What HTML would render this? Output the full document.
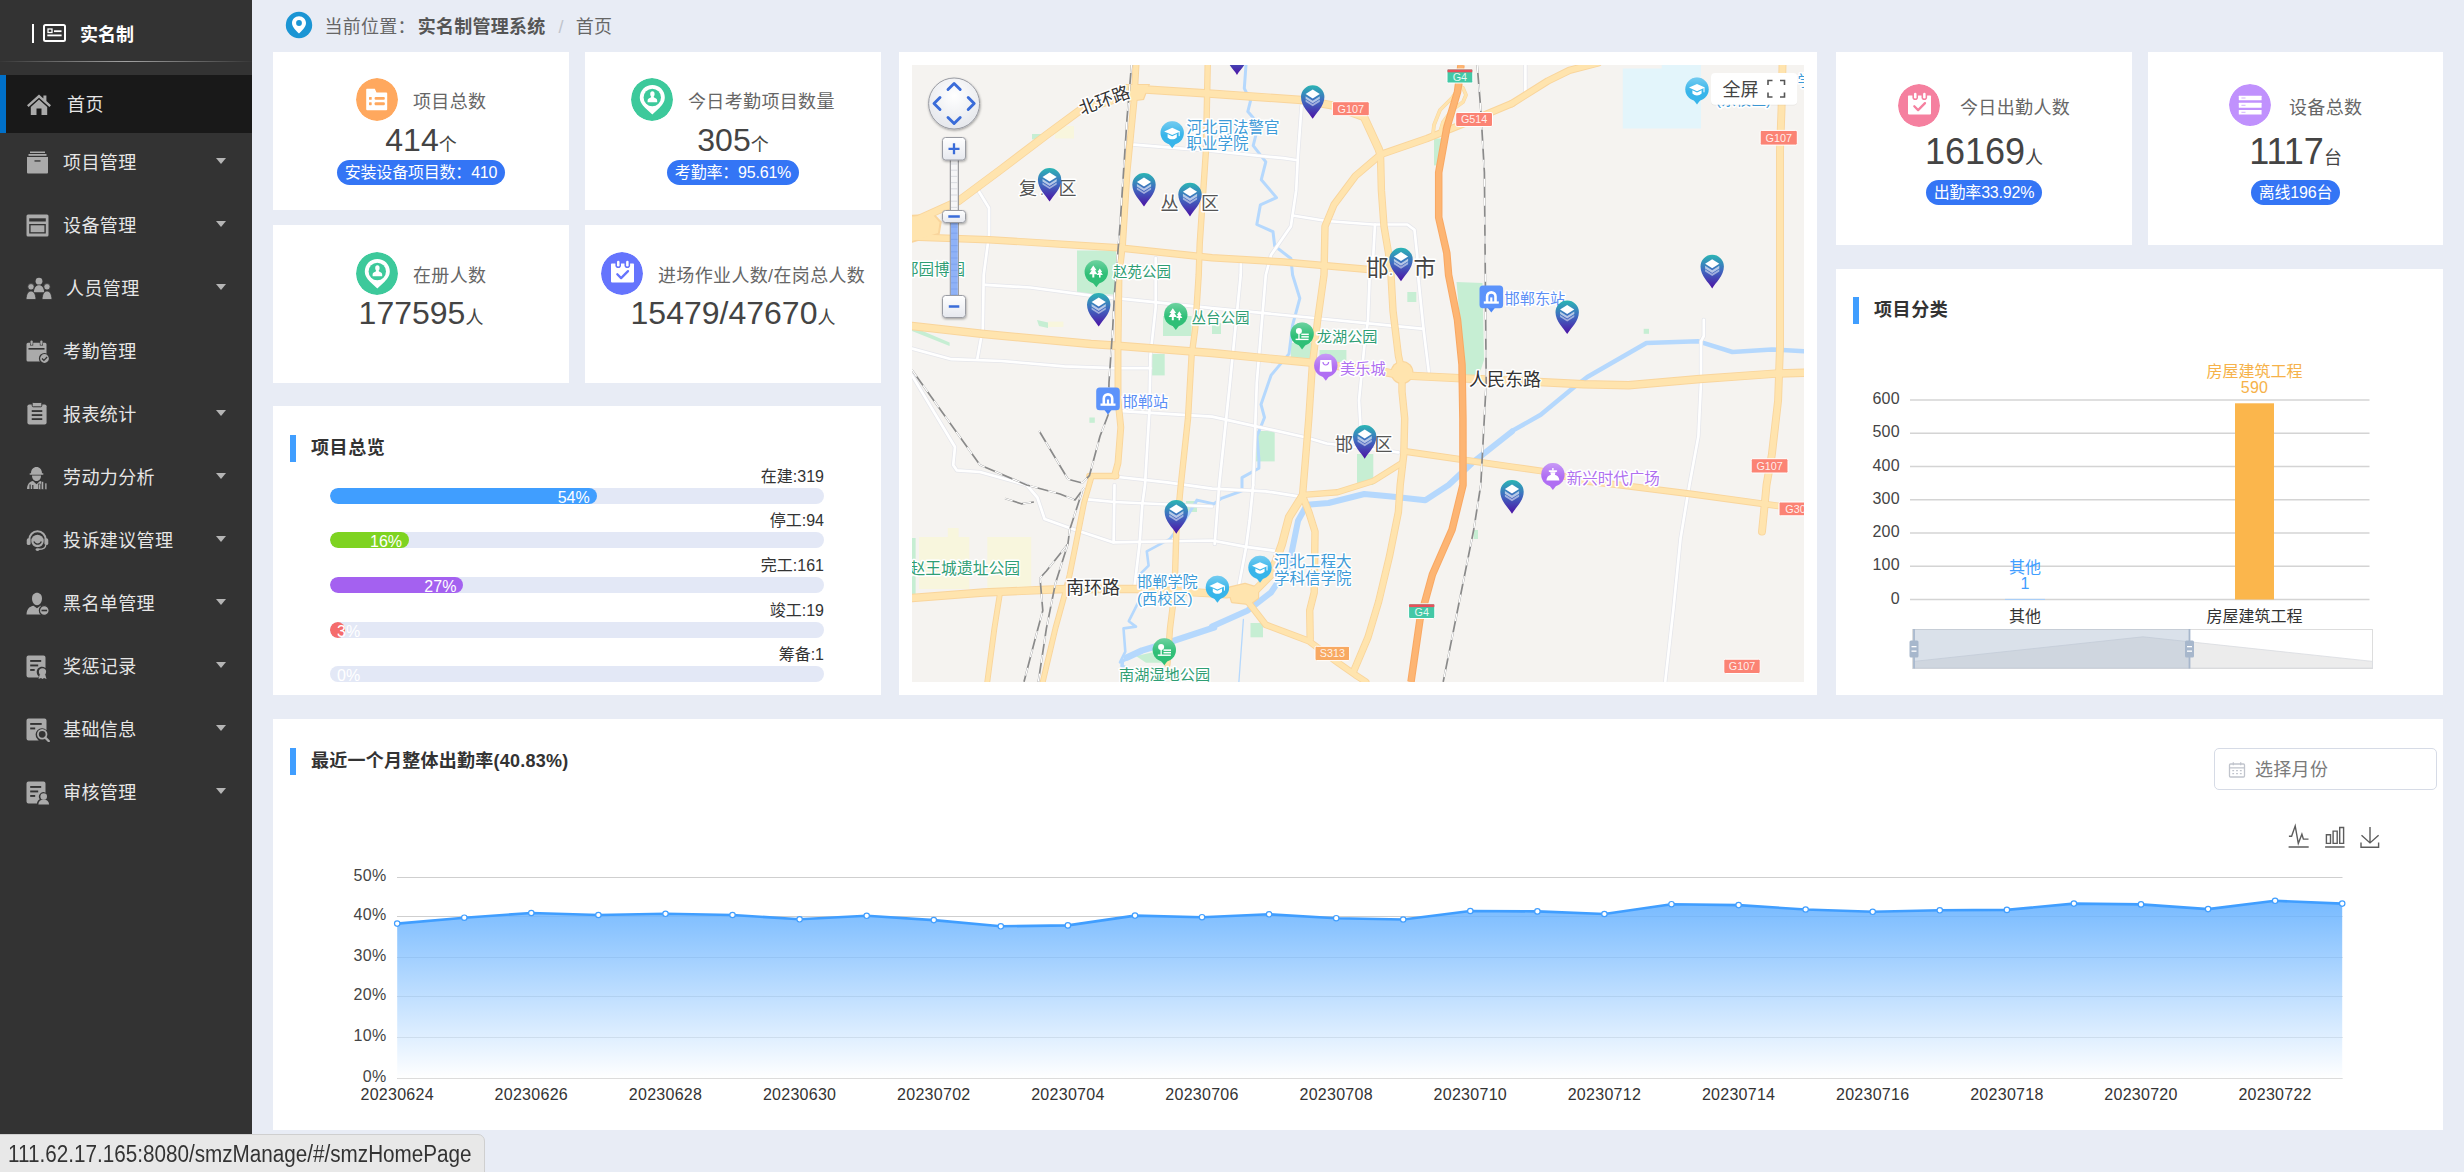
<!DOCTYPE html>
<html lang="zh-CN">
<head>
<meta charset="utf-8">
<title>实名制管理系统</title>
<style>
*{box-sizing:border-box;margin:0;padding:0}
html,body{width:2464px;height:1172px;overflow:hidden}
body{position:relative;background:#e8ecf5;font-family:"Liberation Sans","Noto Sans CJK SC",sans-serif;color:#333}
.abs{position:absolute}
/* sidebar */
#side{position:absolute;left:0;top:0;width:252px;height:1172px;background:#333333}
#side .logo{position:absolute;left:80px;top:21px;font-size:18px;font-weight:bold;color:#fff;line-height:28px;white-space:nowrap}
#side .bar{position:absolute;left:32px;top:24px;width:2px;height:19px;background:#fff}
#side .hr{position:absolute;left:0;top:61px;width:252px;height:1px;background:linear-gradient(90deg,rgba(255,255,255,0.02),rgba(255,255,255,0.55) 50%,rgba(255,255,255,0.02))}
.mi{position:absolute;left:0;width:252px;height:58px;color:#e6e6e6;font-size:18px;line-height:58px;white-space:nowrap}
.mi.on{background:#191919;border-left:6px solid #0070c9}
.mi svg{position:absolute;left:26px;top:18px}
.mi span{position:absolute;left:63px;top:1.2px;letter-spacing:.4px}
.mi i{position:absolute;left:216px;top:25px;width:0;height:0;border-left:5.5px solid transparent;border-right:5.5px solid transparent;border-top:6px solid #b5b5b5}
/* breadcrumb */
#bc{position:absolute;left:324.5px;top:13.6px;letter-spacing:.25px;font-size:18px;line-height:27px;color:#666;white-space:nowrap}
#bc b{color:#555;margin-left:2px}
#bc em{font-style:normal;color:#c0c4cc;margin:0 12px 0 13px}
/* cards */
.card{position:absolute;background:#fff}
.ic{position:absolute;width:42px;height:42px;border-radius:50%}
.lb{position:absolute;padding-top:1.2px;letter-spacing:.35px;font-size:18px;line-height:24px;color:#666;white-space:nowrap}
.num{position:absolute;left:0;width:100%;text-align:center;font-size:32px;line-height:36px;color:#444;white-space:nowrap}
.num small{font-size:18px;line-height:1}
.num.big{font-size:36px;line-height:40px}
.bdg{position:absolute;height:25px;border-radius:13px;background:#3475f5;color:#fff;font-size:16px;line-height:26px;text-align:center;white-space:nowrap;letter-spacing:-0.2px}
.ttl{position:absolute;letter-spacing:.6px;font-size:18px;font-weight:bold;color:#333;line-height:27px;white-space:nowrap}
.ttl:before{content:"";position:absolute;left:-21px;top:0;width:6px;height:27px;background:#409eff}
/* progress */
.pl{position:absolute;right:57px;font-size:16px;line-height:20px;color:#333;white-space:nowrap;text-align:right}
.pt{position:absolute;left:57px;width:494px;height:16px;border-radius:8px;background:#e3e8f6;overflow:hidden}
.pf{position:absolute;left:0;top:0;height:16px;border-radius:8px;color:#fff;font-size:16px;line-height:20px;text-align:right;padding-right:7px;white-space:nowrap}
/* status */
#st span{display:inline-block;transform:scaleX(.899);transform-origin:0 50%}
#st{position:absolute;left:-1px;top:1134px;width:486px;height:40px;background:#e8e8e8;border:1px solid #cfcfcf;border-top-right-radius:7px;font-size:23px;line-height:39px;color:#333;padding-left:8px;white-space:nowrap}
</style>
</head>
<body>

<!-- SIDEBAR -->
<div id="side">
  <div class="bar"></div>
  <svg class="abs" style="left:43px;top:24px" width="23" height="18" viewBox="0 0 23 18"><rect x="1" y="1" width="21" height="16" rx="1.5" fill="none" stroke="#fff" stroke-width="2"/><rect x="5" y="5" width="4" height="3.5" fill="none" stroke="#fff" stroke-width="1.3"/><rect x="11" y="6.3" width="7.5" height="1.8" fill="#fff"/><rect x="4.3" y="10.5" width="14.3" height="1.8" fill="#fff"/></svg>
  <div class="logo">实名制</div>
  <div class="hr"></div>
  <div class="mi on" style="top:75px;line-height:59px"><svg width="26" height="24" viewBox="0 0 26 24" style="left:20px;top:17px"><path d="M13 2.500L1 13.200l1.600 1.700L13 5.700l10.400 9.200 1.600-1.700-4.600-4.100V3.500h-3v2.900z" fill="#aaaaaa"/><path d="M13 7.600l-8.200 7.300V23h5.700v-6.500h5V23h5.700v-8.100z" fill="#aaaaaa"/></svg><span style="left:61px">首页</span></div>
  <div class="mi" style="top:133px"><svg width="23" height="23" viewBox="0 0 23 23"><rect x="4" y="0.500" width="15" height="1.500" fill="#aaaaaa"/><rect x="2.500" y="3" width="18" height="1.800" fill="#aaaaaa"/><path d="M1 6h21v15.500a1 1 0 0 1-1 1H2a1 1 0 0 1-1-1z" fill="#aaaaaa"/><rect x="8.500" y="9.300" width="6" height="1.300" fill="#333"/></svg><span style="left:63px">项目管理</span><i></i></div>
  <div class="mi" style="top:196px"><svg width="23" height="23" viewBox="0 0 23 23"><rect x="0.500" y="0.500" width="22" height="22" rx="1.500" fill="#aaaaaa"/><rect x="3.200" y="4.300" width="16.600" height="3.200" fill="#333"/><rect x="3.200" y="10" width="16.600" height="9.500" fill="#333"/><rect x="4.600" y="11.300" width="13.800" height="6.900" fill="#aaaaaa"/></svg><span style="left:63px">设备管理</span><i></i></div>
  <div class="mi" style="top:259px"><svg width="26" height="23" viewBox="0 0 26 23"><circle cx="13" cy="4.200" r="3.400" fill="#aaaaaa"/><path d="M13 8.200c-3 0-4.800 2.600-5.200 7h10.400c-.4-4.400-2.200-7-5.200-7z" fill="#aaaaaa"/><circle cx="5" cy="9.800" r="3.200" fill="#aaaaaa" stroke="#333" stroke-width="0.800"/><circle cx="21" cy="9.800" r="3.200" fill="#aaaaaa" stroke="#333" stroke-width="0.800"/><path d="M5 14c-3 0-4.600 3-5 8.500h10c-.4-5.500-2-8.500-5-8.500z" fill="#aaaaaa" stroke="#333" stroke-width="0.800"/><path d="M21 14c-3 0-4.600 3-5 8.500h10c-.4-5.500-2-8.500-5-8.500z" fill="#aaaaaa" stroke="#333" stroke-width="0.800"/></svg><span style="left:66px">人员管理</span><i></i></div>
  <div class="mi" style="top:322px"><svg width="24" height="24" viewBox="0 0 24 24"><rect x="4.500" y="0.500" width="2.200" height="4.500" rx="1" fill="#aaaaaa"/><rect x="14.300" y="0.500" width="2.200" height="4.500" rx="1" fill="#aaaaaa"/><path d="M2 2.800h2v2.700h3.200V2.800h6.600v2.700H17V2.800h2a1.500 1.500 0 0 1 1.500 1.500V20a1.500 1.500 0 0 1-1.500 1.500H2A1.500 1.500 0 0 1 .5 20V4.300A1.500 1.500 0 0 1 2 2.800z" fill="#aaaaaa"/><rect x="2.500" y="8" width="16" height="1.600" fill="#333"/><circle cx="18.500" cy="18.500" r="5" fill="#aaaaaa" stroke="#333" stroke-width="1.200"/><path d="M16 18.500l1.900 1.900 3.200-3.400" fill="none" stroke="#333" stroke-width="1.300"/></svg><span style="left:63px">考勤管理</span></div>
  <div class="mi" style="top:385px"><svg width="22" height="23" viewBox="0 0 22 24" style="top:17px"><rect x="1" y="2.500" width="20" height="21" rx="2" fill="#aaaaaa"/><rect x="6" y="0.500" width="10" height="4.500" rx="1" fill="#aaaaaa" stroke="#333" stroke-width="1"/><rect x="5.500" y="8.500" width="11" height="1.900" fill="#333"/><rect x="5.500" y="12.700" width="11" height="1.900" fill="#333"/><rect x="5.500" y="16.900" width="11" height="1.900" fill="#333"/></svg><span style="left:63px">报表统计</span><i></i></div>
  <div class="mi" style="top:448px"><svg width="23" height="24" viewBox="0 0 23 24"><path d="M5 7.200c0-3.800 2.400-6.200 5.500-6.200S16 3.400 16 7.200h1.300v1.500H3.700V7.200z" fill="#aaaaaa"/><path d="M6 9.500h9c0 3.300-1.800 5.500-4.500 5.500S6 12.800 6 9.500z" fill="#aaaaaa"/><path d="M1 23c.3-5 2.600-7.500 6-8l3.500 3.200L14 15c1.200.2 2.200.6 3 1.300V23z" fill="#aaaaaa"/><rect x="12.500" y="18" width="2" height="5.500" fill="#aaaaaa" stroke="#333" stroke-width="0.600"/><rect x="15.700" y="15.500" width="2" height="8" fill="#aaaaaa" stroke="#333" stroke-width="0.600"/><rect x="18.900" y="17" width="2" height="6.500" fill="#aaaaaa" stroke="#333" stroke-width="0.600"/><rect x="3.500" y="18.500" width="1.200" height="5" fill="#333"/><rect x="6.200" y="19" width="1.200" height="4.500" fill="#333"/></svg><span style="left:63px">劳动力分析</span><i></i></div>
  <div class="mi" style="top:511px"><svg width="23" height="23" viewBox="0 0 25 25"><path d="M3.500 12C3.500 6.500 7.500 2.500 12.500 2.500S21.500 6.500 21.500 12" fill="none" stroke="#aaaaaa" stroke-width="2.200"/><circle cx="12.500" cy="13" r="6.800" fill="#aaaaaa"/><rect x="0.800" y="10" width="4.200" height="7.500" rx="2" fill="#aaaaaa"/><rect x="20" y="10" width="4.200" height="7.500" rx="2" fill="#aaaaaa"/><path d="M8.500 13.500c1 2 2.500 3 4.200 3s3.100-1 4-3" fill="none" stroke="#333" stroke-width="1.400"/><path d="M21.500 17c0 3-3 5-8 5" fill="none" stroke="#aaaaaa" stroke-width="1.500"/><ellipse cx="12.500" cy="22.300" rx="2.200" ry="1.500" fill="#aaaaaa"/></svg><span style="left:63px">投诉建议管理</span><i></i></div>
  <div class="mi" style="top:574px"><svg width="24" height="24" viewBox="0 0 24 24"><path d="M6 6.500C6 3 8.200.800 11 .800S16 3 16 6.500c0 3.700-2.200 6.700-5 6.700S6 10.200 6 6.500z" fill="#aaaaaa"/><path d="M.500 22.500c.3-5.500 3-8 7-8.700l3.500 2.500 3.500-2.500c1.500.3 2.800.9 3.800 1.800v6.900z" fill="#aaaaaa"/><circle cx="18.300" cy="18.500" r="4.900" fill="#aaaaaa" stroke="#333" stroke-width="1.300"/><rect x="15.500" y="17.700" width="5.600" height="1.600" fill="#333"/></svg><span style="left:63px">黑名单管理</span><i></i></div>
  <div class="mi" style="top:637px"><svg width="23" height="24" viewBox="0 0 23 24"><path d="M2.500.500h15a2 2 0 0 1 2 2V13c-1-.8-2.200-1.200-3.500-1.200-3 0-5.300 2.300-5.300 5.200 0 1.800.8 3.300 2 4.300V22.500H2.500a2 2 0 0 1-2-2v-18a2 2 0 0 1 2-2z" fill="#aaaaaa"/><rect x="4.200" y="5" width="11" height="1.900" fill="#333"/><rect x="4.200" y="9.500" width="8" height="1.900" fill="#333"/><rect x="4.200" y="14" width="4.500" height="1.900" fill="#333"/><circle cx="16.500" cy="16.800" r="3.600" fill="#aaaaaa"/><path d="M13.800 19.500L12.500 24l2.500-1 1.500 1 1.500-1 2.500 1-1.300-4.500z" fill="#aaaaaa"/></svg><span style="left:63px">奖惩记录</span><i></i></div>
  <div class="mi" style="top:700px"><svg width="24" height="24" viewBox="0 0 24 24"><path d="M2.500.500h16a2 2 0 0 1 2 2v9.800a6.300 6.300 0 0 0-9.300 8.500c.5.700 1 1.200 1.600 1.700H2.500a2 2 0 0 1-2-2v-18a2 2 0 0 1 2-2z" fill="#aaaaaa"/><rect x="4.200" y="5" width="11.500" height="1.900" fill="#333"/><rect x="4.200" y="9.500" width="5" height="1.900" fill="#333"/><circle cx="16.200" cy="16.300" r="4.300" fill="none" stroke="#aaaaaa" stroke-width="1.800"/><path d="M19.300 19.600l3.500 3.500" stroke="#aaaaaa" stroke-width="2.200" stroke-linecap="round"/></svg><span style="left:63px">基础信息</span><i></i></div>
  <div class="mi" style="top:763px"><svg width="24" height="24" viewBox="0 0 24 24"><path d="M2.500.500h15a2 2 0 0 1 2 2v9.200a4.500 4.500 0 0 0-5.800 6.500c-1.600.8-2.500 2.300-2.800 4.300H2.500a2 2 0 0 1-2-2v-18a2 2 0 0 1 2-2z" fill="#aaaaaa"/><rect x="4.200" y="5" width="11" height="1.900" fill="#333"/><rect x="4.200" y="9.500" width="8" height="1.900" fill="#333"/><rect x="4.200" y="14" width="5" height="1.900" fill="#333"/><circle cx="17.700" cy="15.500" r="3.300" fill="#aaaaaa"/><path d="M12.300 23.500c.3-3.300 2.300-5 5.400-5s5.100 1.700 5.400 5z" fill="#aaaaaa"/></svg><span style="left:63px">审核管理</span><i></i></div>
</div>

<!-- BREADCRUMB -->
<svg class="abs" style="left:285px;top:11px" width="28" height="28" viewBox="0 0 28 28"><circle cx="14" cy="14" r="13.2" fill="#1b95d4"/><path d="M14 5.2c-4 0-7 3-7 6.8 0 4.6 5.2 8.600 7 10.600 1.800-2 7-6 7-10.600 0-3.800-3-6.800-7-6.800z" fill="#fff"/><circle cx="14" cy="12" r="2.900" fill="#1b95d4"/></svg>
<div id="bc">当前位置：<b>实名制管理系统</b><em>/</em>首页</div>

<!-- LEFT CARDS -->
<div class="card" style="left:273px;top:52px;width:296px;height:158px" id="c1"><svg class="ic" style="left:83px;top:26px;height:43px" viewBox="0 0 42 43"><ellipse cx="21" cy="21.5" rx="21" ry="21.5" fill="#ffa85e"/><path d="M11 10.700h7.800l1.700 3.900H30.200a1 1 0 0 1 1 1V31.300a1 1 0 0 1-1 1H11.200a1 1 0 0 1-1-1V11.700a1 1 0 0 1 .8-1z" fill="#fff"/><rect x="13" y="18.900" width="2.700" height="2.900" rx=".6" fill="#ffa85e"/><rect x="18.600" y="18.900" width="10.200" height="2.900" rx="1" fill="#ffa85e"/><rect x="13" y="24.300" width="2.700" height="2.900" rx=".6" fill="#ffa85e"/><rect x="18.600" y="24.300" width="10.200" height="2.900" rx="1" fill="#ffa85e"/></svg><div class="lb" style="left:140px;top:37px">项目总数</div><div class="num" style="top:70px">414<small>个</small></div><div class="bdg" style="left:64px;top:108px;width:168px">安装设备项目数：410</div></div>
<div class="card" style="left:585px;top:52px;width:296px;height:158px" id="c2"><svg class="ic" style="left:46px;top:26px;height:43px" viewBox="0 0 42 43"><ellipse cx="21" cy="21.500" rx="21" ry="21.500" fill="#3dc99b"/><path d="M21.300 6.900c-7 0-12.500 5.500-12.500 12.400 0 4.500 2.400 7.600 5.200 10.400l7.300 6.700 7.300-6.700c2.800-2.800 5.200-5.900 5.200-10.400 0-6.900-5.500-12.400-12.500-12.400z" fill="#fff"/><circle cx="21.300" cy="19.500" r="8.700" fill="#3dc99b"/><path d="M21.400 13.300c-1.400 0-2.200 1.100-2.200 2.700 0 1.200.4 2.200 1 2.800-.1.600-.6.900-1.500 1.200-1.300.5-2.100 1.300-2.100 2.800v1.500h9.600v-1.500c0-1.500-.8-2.300-2.100-2.800-.9-.3-1.400-.6-1.500-1.200.6-.6 1-1.600 1-2.800 0-1.600-.8-2.700-2.200-2.700z" fill="#fff"/></svg><div class="lb" style="left:103px;top:37px">今日考勤项目数量</div><div class="num" style="top:70px">305<small>个</small></div><div class="bdg" style="left:82px;top:108px;width:132px">考勤率：95.61%</div></div>
<div class="card" style="left:273px;top:225px;width:296px;height:158px" id="c3"><svg class="ic" style="left:83px;top:27px;height:43px" viewBox="0 0 42 43"><ellipse cx="21" cy="21.500" rx="21" ry="21.500" fill="#3dc99b"/><path d="M21.300 6.900c-7 0-12.500 5.500-12.500 12.400 0 4.500 2.400 7.600 5.200 10.400l7.300 6.700 7.300-6.700c2.800-2.800 5.200-5.900 5.200-10.400 0-6.900-5.500-12.400-12.500-12.400z" fill="#fff"/><circle cx="21.300" cy="19.500" r="8.700" fill="#3dc99b"/><path d="M21.400 13.300c-1.400 0-2.200 1.100-2.200 2.700 0 1.200.4 2.200 1 2.800-.1.600-.6.900-1.500 1.200-1.300.5-2.100 1.300-2.100 2.800v1.500h9.600v-1.500c0-1.500-.8-2.300-2.100-2.800-.9-.3-1.400-.6-1.500-1.200.6-.6 1-1.600 1-2.800 0-1.600-.8-2.700-2.200-2.700z" fill="#fff"/></svg><div class="lb" style="left:140px;top:38px">在册人数</div><div class="num" style="top:70px">177595<small>人</small></div></div>
<div class="card" style="left:585px;top:225px;width:296px;height:158px" id="c4"><svg class="ic" style="left:16px;top:27px;height:43px" viewBox="0 0 42 43"><ellipse cx="21" cy="21.500" rx="21" ry="21.500" fill="#6574fd"/><rect x="10" y="11.600" width="23" height="18.800" rx=".8" fill="#fff"/><rect x="14.400" y="8.500" width="5.600" height="7.500" rx="2.800" fill="#6574fd"/><rect x="23.500" y="8.500" width="5.600" height="7.500" rx="2.800" fill="#6574fd"/><rect x="16" y="8.800" width="2.500" height="5.600" rx="1.250" fill="#fff"/><rect x="25.100" y="8.800" width="2.500" height="5.600" rx="1.250" fill="#fff"/><path d="M16.300 22.300l3.800 3.800 6.900-7" fill="none" stroke="#6574fd" stroke-width="2.300" stroke-linecap="round" stroke-linejoin="round"/></svg><div class="lb" style="left:73px;top:38px">进场作业人数/在岗总人数</div><div class="num" style="top:70px">15479/47670<small>人</small></div></div>

<!-- OVERVIEW -->
<div class="card" style="left:273px;top:406px;width:608px;height:289px" id="ov"><div class="ttl" style="left:38px;top:29px">项目总览</div><div class="pl" style="top:61.0px">在建:319</div><div class="pt" style="top:82.0px"><div class="pf" style="width:54%;background:#409eff">54%</div></div><div class="pl" style="top:105.0px">停工:94</div><div class="pt" style="top:126.0px"><div class="pf" style="width:16%;background:#7ed321">16%</div></div><div class="pl" style="top:150.0px">完工:161</div><div class="pt" style="top:171.0px"><div class="pf" style="width:27%;background:#a461f0">27%</div></div><div class="pl" style="top:195.0px">竣工:19</div><div class="pt" style="top:216.0px"><div class="pf" style="width:3%;background:#f56c6c;text-align:left;padding:0 0 0 7px;overflow:visible">3%</div></div><div class="pl" style="top:239.0px">筹备:1</div><div class="pt" style="top:260.0px"><div class="pf" style="width:60px;text-align:left;padding:0 0 0 7px">0%</div></div></div>

<!-- MAP -->
<div class="card" style="left:899px;top:52px;width:918px;height:643px" id="mapcard"><svg class="abs" style="left:13px;top:13px" width="892" height="617" viewBox="912 65 892 617" font-family="Liberation Sans, Noto Sans CJK SC, sans-serif"><defs><linearGradient id="mk" x1="0" y1="0" x2="0" y2="1"><stop offset="0" stop-color="#2bb5b4"/><stop offset=".45" stop-color="#3f6dc0"/><stop offset="1" stop-color="#4c12a5"/></linearGradient><linearGradient id="btn" x1="0" y1="0" x2="0" y2="1"><stop offset="0" stop-color="#ffffff"/><stop offset="1" stop-color="#e6e8ee"/></linearGradient><radialGradient id="pan" cx=".5" cy=".35" r=".7"><stop offset="0" stop-color="#ffffff"/><stop offset="1" stop-color="#e3e5ea"/></radialGradient><filter id="sh" x="-30%" y="-30%" width="160%" height="160%"><feDropShadow dx="0.5" dy="1.2" stdDeviation="1.3" flood-color="#000" flood-opacity=".35"/></filter><g id="m"><path d="M0 0C-3.400-5.800-11.700-12.600-11.700-21.900a11.700 11.700 0 0 1 23.400 0C11.700-12.600 3.400-5.800 0 0z" fill="url(#mk)"/><path d="M0-29.200l7.100 4.500-7.100 4.500-7.100-4.500z" fill="#fff"/><path d="M-7.100-22.600l7.100 4.500 7.100-4.500v2.600l-7.100 4.500-7.100-4.500z" fill="#fff" fill-opacity=".62"/><path d="M-7.100-19.200l7.100 4.500 7.100-4.500v2.200l-7.100 4.500-7.100-4.500z" fill="#fff" fill-opacity=".5"/></g><linearGradient id="pg" x1="0" y1="0" x2="0" y2="1"><stop offset="0" stop-color="#fff" stop-opacity=".3"/><stop offset=".6" stop-color="#fff" stop-opacity="0"/></linearGradient></defs><rect x="912" y="65" width="892" height="617" fill="#f5f3f0"/><rect x="1077.0" y="250.5" width="39.0" height="44.0" fill="#c6eed3"/><rect x="1032.0" y="134.0" width="11.0" height="5.4" fill="#c6eed3"/><rect x="1055.0" y="126.0" width="19.0" height="12.5" fill="#f8f6dd"/><rect x="1163.0" y="316.0" width="28.6" height="20.0" fill="#c6eed3"/><path d="M1037 320L1048 322.500L1048 328L1039 326z" fill="#c6eed3"/><rect x="1048.0" y="321.6" width="15.4" height="5.4" fill="#f8f6dd"/><path d="M912 326.500L949.600 342.500V346L912 331z" fill="#c6eed3"/><rect x="1152.0" y="353.9" width="12.7" height="21.5" fill="#c6eed3"/><rect x="1434.0" y="138.5" width="9.0" height="26.9" fill="#c6eed3"/><rect x="1290.9" y="343.0" width="21.5" height="16.0" fill="#c6eed3"/><rect x="1319.5" y="350.0" width="26.9" height="14.6" fill="#c6eed3"/><rect x="1212.0" y="323.0" width="9.0" height="11.0" fill="#c6eed3"/><rect x="1255.0" y="431.0" width="19.7" height="30.4" fill="#c6eed3"/><rect x="1357.0" y="454.0" width="16.3" height="31.0" fill="#c6eed3"/><path d="M1456.500 282L1482.500 283L1484 360L1479 375.400L1463 375.400L1462 345z" fill="#c6eed3"/><rect x="1407.3" y="292.0" width="9.0" height="10.0" fill="#c6eed3"/><rect x="1643.7" y="328.8" width="5.3" height="5.0" fill="#c6eed3"/><path d="M1622.800 68.600H1661.700V65H1701V128.600H1622.800z" fill="#e3f5fb"/><rect x="919.0" y="537.0" width="50.3" height="52.0" fill="#f8f6dd"/><rect x="947.8" y="528.0" width="10.8" height="10.0" fill="#f8f6dd"/><rect x="987.3" y="537.0" width="43.9" height="52.0" fill="#f8f6dd"/><rect x="912.0" y="538.0" width="3.6" height="56.0" fill="#c6eed3"/><path d="M1136 656L1170 648.500V662.700H1146z" fill="#c6eed3"/><rect x="1250.5" y="623.0" width="12.5" height="14.3" fill="#c6eed3"/><rect x="1186.0" y="501.0" width="11.0" height="11.0" fill="#c6eed3"/><rect x="1473.6" y="530.0" width="4.4" height="9.0" fill="#c6eed3"/><rect x="1089.4" y="417.5" width="5.4" height="5.3" fill="#c6eed3"/><path d="M1246.0 65.0 L1244.3 88.3 L1250.5 100.8 L1247.8 111.6 L1258.6 124.0 L1253.2 145.6 L1265.8 161.8 L1261.3 179.7 L1276.5 197.6 L1260.4 204.8 L1256.8 224.5 L1273.0 231.7 L1274.7 246.0 L1290.9 258.5 L1292.6 275.0 L1299.8 298.3 L1292.6 325.2 L1289.0 353.9 L1271.0 375.4 L1261.0 404.4 L1264.5 417.5 L1257.0 436.3 L1258.9 458.8 L1258.9 468.2 L1242.0 477.6 L1242.0 490.8 L1221.4 498.3 L1213.9 503.9 L1197.0 500.1 L1184.4 520.8 L1176.3 530.2" fill="none" stroke="#b5d8fd" stroke-width="3" stroke-linejoin="round" stroke-linecap="round"/><path d="M1512.0 431.0 L1540.7 414.8 L1573.0 388.0 L1587.3 377.0 L1646.4 343.0 L1698.4 341.3 L1732.4 352.0 L1771.9 349.4 L1804.0 351.2" fill="none" stroke="#b5d8fd" stroke-width="4.5" stroke-linejoin="round" stroke-linecap="round"/><path d="M1512.0 431.5 L1471.9 463.2 L1448.6 485.0 L1425.3 500.2 L1391.2 496.6 L1364.3 494.0 L1328.5 503.0 L1307.0 504.7 L1298.0 520.8 L1289.0 565.6 L1271.0 592.5 L1247.8 610.4 L1212.0 626.6" fill="none" stroke="#b5d8fd" stroke-width="6" stroke-linejoin="round" stroke-linecap="round"/><path d="M1214.0 627.5 L1170.0 642.0 L1142.0 650.5 L1127.0 657.5" fill="none" stroke="#b5d8fd" stroke-width="6.5" stroke-linejoin="round" stroke-linecap="round"/><path d="M1130.0 657.0 L1122.5 661.0 L1122.0 666.0 L1128.0 668.5" fill="none" stroke="#b5d8fd" stroke-width="3.5" stroke-linejoin="round" stroke-linecap="round"/><path d="M1176.3 530.2 L1170.0 538.8 L1146.8 551.3 L1148.6 565.6 L1139.6 574.6 L1141.4 596.1 L1128.8 621.2 L1136.0 626.6 L1123.5 628.4 L1125.3 651.7 L1120.0 662.4" fill="none" stroke="#b5d8fd" stroke-width="2.6" stroke-linejoin="round" stroke-linecap="round"/><path d="M1243.4 619.4 L1238.9 681.8" fill="none" stroke="#b5d8fd" stroke-width="1.3" stroke-linejoin="round" stroke-linecap="round"/><path d="M978.0 190.0 L989.0 208.0 L989.0 235.0 L983.7 275.0 L982.8 328.8 L977.4 358.3" fill="none" stroke="#e5e6eb" stroke-width="4.2" stroke-linejoin="round" stroke-linecap="round"/><path d="M1134.0 144.7 L1212.0 151.0 L1283.7 158.2 L1296.0 160.0" fill="none" stroke="#e5e6eb" stroke-width="4.2" stroke-linejoin="round" stroke-linecap="round"/><path d="M1301.6 105.3 L1298.0 154.6 L1296.2 190.4 L1290.9 226.3 L1271.0 255.0 L1265.8 275.0 L1256.8 382.5 L1253.2 485.0" fill="none" stroke="#e5e6eb" stroke-width="4.2" stroke-linejoin="round" stroke-linecap="round"/><path d="M1292.6 215.5 L1326.7 221.0 L1373.3 224.5 L1407.3 224.5 L1414.5 229.9 L1417.2 255.0 L1418.0 275.0 L1423.5 328.8 L1428.8 371.8" fill="none" stroke="#e5e6eb" stroke-width="4.2" stroke-linejoin="round" stroke-linecap="round"/><path d="M1375.0 224.5 L1373.3 255.0 L1369.7 275.0 L1368.0 319.8 L1364.3 346.7 L1359.0 400.4 L1360.7 429.0" fill="none" stroke="#e5e6eb" stroke-width="4.2" stroke-linejoin="round" stroke-linecap="round"/><path d="M1525.4 65.0 L1525.4 93.7" fill="none" stroke="#e5e6eb" stroke-width="4.2" stroke-linejoin="round" stroke-linecap="round"/><path d="M912.0 348.5 L951.4 359.2 L1001.6 361.0 L1064.3 366.4 L1114.5 368.2 L1150.4 368.2" fill="none" stroke="#e5e6eb" stroke-width="4.2" stroke-linejoin="round" stroke-linecap="round"/><path d="M985.5 284.9 L1030.3 287.5 L1091.2 295.6 L1125.3 299.2 L1212.0 308.2 L1314.2 318.0 L1423.5 328.8" fill="none" stroke="#e5e6eb" stroke-width="4.2" stroke-linejoin="round" stroke-linecap="round"/><path d="M1155.7 275.0 L1155.7 307.3 L1150.4 355.6 L1149.5 409.4 L1145.0 485.0 L1142.3 504.7 L1139.6 544.0 L1134.2 589.0" fill="none" stroke="#e5e6eb" stroke-width="4.2" stroke-linejoin="round" stroke-linecap="round"/><path d="M1155.7 258.0 L1155.7 275.0" fill="none" stroke="#e5e6eb" stroke-width="4.2" stroke-linejoin="round" stroke-linecap="round"/><path d="M912.0 375.4 L955.0 447.0 L953.2 465.0 L956.8 470.3 L980.0 472.0 L1026.7 485.0 L1037.4 497.5 L1044.6 519.0 L1069.7 528.0 L1112.7 542.3 L1212.0 540.5 L1246.0 546.8 L1278.3 551.3" fill="none" stroke="#e5e6eb" stroke-width="4.2" stroke-linejoin="round" stroke-linecap="round"/><path d="M1121.7 411.2 L1212.0 416.6 L1305.2 437.2 L1326.7 443.5 L1398.4 452.4" fill="none" stroke="#e5e6eb" stroke-width="4.2" stroke-linejoin="round" stroke-linecap="round"/><path d="M1240.7 275.0 L1230.0 382.5 L1219.2 485.0 L1214.7 544.0" fill="none" stroke="#e5e6eb" stroke-width="4.2" stroke-linejoin="round" stroke-linecap="round"/><path d="M1087.6 499.3 L1114.5 502.0 L1212.0 506.5" fill="none" stroke="#e5e6eb" stroke-width="4.2" stroke-linejoin="round" stroke-linecap="round"/><path d="M1114.5 485.0 L1113.6 542.3" fill="none" stroke="#e5e6eb" stroke-width="4.2" stroke-linejoin="round" stroke-linecap="round"/><path d="M1253.2 485.0 L1249.6 520.8 L1246.0 547.7 L1238.9 585.4" fill="none" stroke="#e5e6eb" stroke-width="4.2" stroke-linejoin="round" stroke-linecap="round"/><path d="M1118.0 477.0 L1167.0 482.3 L1212.0 488.6 L1265.8 491.3 L1299.8 496.6" fill="none" stroke="#e5e6eb" stroke-width="4.2" stroke-linejoin="round" stroke-linecap="round"/><path d="M1703.8 319.8 L1703.8 336.0 L1701.0 341.3 L1701.0 382.5 L1698.4 436.3 L1689.4 485.0 L1680.5 538.8 L1673.3 610.4 L1665.2 681.8" fill="none" stroke="#e5e6eb" stroke-width="4.2" stroke-linejoin="round" stroke-linecap="round"/><path d="M1241.0 258.0 L1240.7 275.0" fill="none" stroke="#e5e6eb" stroke-width="4.2" stroke-linejoin="round" stroke-linecap="round"/><path d="M1191.0 354.0 L1189.0 416.0" fill="none" stroke="#e5e6eb" stroke-width="4.2" stroke-linejoin="round" stroke-linecap="round"/><path d="M978.0 190.0 L989.0 208.0 L989.0 235.0 L983.7 275.0 L982.8 328.8 L977.4 358.3" fill="none" stroke="#ffffff" stroke-width="2.7" stroke-linejoin="round" stroke-linecap="round"/><path d="M1134.0 144.7 L1212.0 151.0 L1283.7 158.2 L1296.0 160.0" fill="none" stroke="#ffffff" stroke-width="2.7" stroke-linejoin="round" stroke-linecap="round"/><path d="M1301.6 105.3 L1298.0 154.6 L1296.2 190.4 L1290.9 226.3 L1271.0 255.0 L1265.8 275.0 L1256.8 382.5 L1253.2 485.0" fill="none" stroke="#ffffff" stroke-width="2.7" stroke-linejoin="round" stroke-linecap="round"/><path d="M1292.6 215.5 L1326.7 221.0 L1373.3 224.5 L1407.3 224.5 L1414.5 229.9 L1417.2 255.0 L1418.0 275.0 L1423.5 328.8 L1428.8 371.8" fill="none" stroke="#ffffff" stroke-width="2.7" stroke-linejoin="round" stroke-linecap="round"/><path d="M1375.0 224.5 L1373.3 255.0 L1369.7 275.0 L1368.0 319.8 L1364.3 346.7 L1359.0 400.4 L1360.7 429.0" fill="none" stroke="#ffffff" stroke-width="2.7" stroke-linejoin="round" stroke-linecap="round"/><path d="M1525.4 65.0 L1525.4 93.7" fill="none" stroke="#ffffff" stroke-width="2.7" stroke-linejoin="round" stroke-linecap="round"/><path d="M912.0 348.5 L951.4 359.2 L1001.6 361.0 L1064.3 366.4 L1114.5 368.2 L1150.4 368.2" fill="none" stroke="#ffffff" stroke-width="2.7" stroke-linejoin="round" stroke-linecap="round"/><path d="M985.5 284.9 L1030.3 287.5 L1091.2 295.6 L1125.3 299.2 L1212.0 308.2 L1314.2 318.0 L1423.5 328.8" fill="none" stroke="#ffffff" stroke-width="2.7" stroke-linejoin="round" stroke-linecap="round"/><path d="M1155.7 275.0 L1155.7 307.3 L1150.4 355.6 L1149.5 409.4 L1145.0 485.0 L1142.3 504.7 L1139.6 544.0 L1134.2 589.0" fill="none" stroke="#ffffff" stroke-width="2.7" stroke-linejoin="round" stroke-linecap="round"/><path d="M1155.7 258.0 L1155.7 275.0" fill="none" stroke="#ffffff" stroke-width="2.7" stroke-linejoin="round" stroke-linecap="round"/><path d="M912.0 375.4 L955.0 447.0 L953.2 465.0 L956.8 470.3 L980.0 472.0 L1026.7 485.0 L1037.4 497.5 L1044.6 519.0 L1069.7 528.0 L1112.7 542.3 L1212.0 540.5 L1246.0 546.8 L1278.3 551.3" fill="none" stroke="#ffffff" stroke-width="2.7" stroke-linejoin="round" stroke-linecap="round"/><path d="M1121.7 411.2 L1212.0 416.6 L1305.2 437.2 L1326.7 443.5 L1398.4 452.4" fill="none" stroke="#ffffff" stroke-width="2.7" stroke-linejoin="round" stroke-linecap="round"/><path d="M1240.7 275.0 L1230.0 382.5 L1219.2 485.0 L1214.7 544.0" fill="none" stroke="#ffffff" stroke-width="2.7" stroke-linejoin="round" stroke-linecap="round"/><path d="M1087.6 499.3 L1114.5 502.0 L1212.0 506.5" fill="none" stroke="#ffffff" stroke-width="2.7" stroke-linejoin="round" stroke-linecap="round"/><path d="M1114.5 485.0 L1113.6 542.3" fill="none" stroke="#ffffff" stroke-width="2.7" stroke-linejoin="round" stroke-linecap="round"/><path d="M1253.2 485.0 L1249.6 520.8 L1246.0 547.7 L1238.9 585.4" fill="none" stroke="#ffffff" stroke-width="2.7" stroke-linejoin="round" stroke-linecap="round"/><path d="M1118.0 477.0 L1167.0 482.3 L1212.0 488.6 L1265.8 491.3 L1299.8 496.6" fill="none" stroke="#ffffff" stroke-width="2.7" stroke-linejoin="round" stroke-linecap="round"/><path d="M1703.8 319.8 L1703.8 336.0 L1701.0 341.3 L1701.0 382.5 L1698.4 436.3 L1689.4 485.0 L1680.5 538.8 L1673.3 610.4 L1665.2 681.8" fill="none" stroke="#ffffff" stroke-width="2.7" stroke-linejoin="round" stroke-linecap="round"/><path d="M1241.0 258.0 L1240.7 275.0" fill="none" stroke="#ffffff" stroke-width="2.7" stroke-linejoin="round" stroke-linecap="round"/><path d="M1191.0 354.0 L1189.0 416.0" fill="none" stroke="#ffffff" stroke-width="2.7" stroke-linejoin="round" stroke-linecap="round"/><path d="M912.0 222.0 L958.6 201.0 L1001.6 169.0 L1046.4 135.0 L1080.5 109.8 L1127.0 95.5 L1137.8 90.0" fill="none" stroke="#f9d59c" stroke-width="8.4" stroke-linejoin="round" stroke-linecap="round"/><path d="M1134.0 88.7 L1212.0 93.7 L1301.6 100.0 L1332.0 105.3 L1364.0 117.0 L1378.7 149.0 L1380.5 154.6" fill="none" stroke="#f9d59c" stroke-width="8.4" stroke-linejoin="round" stroke-linecap="round"/><path d="M912.0 237.0 L989.0 239.7 L1118.0 247.8 L1212.0 257.7 L1283.7 262.0 L1366.0 269.3 L1390.0 272.0" fill="none" stroke="#f9d59c" stroke-width="7.4" stroke-linejoin="round" stroke-linecap="round"/><path d="M1136.0 65.0 L1134.0 101.0 L1127.0 172.5 L1122.6 244.0 L1119.0 275.0 L1118.0 346.7 L1118.0 400.4 L1120.8 427.3 L1118.0 463.0 L1114.5 476.0" fill="none" stroke="#f9d59c" stroke-width="6.9" stroke-linejoin="round" stroke-linecap="round"/><path d="M1089.4 476.0 L1116.3 476.0" fill="none" stroke="#f9d59c" stroke-width="6.4" stroke-linejoin="round" stroke-linecap="round"/><path d="M1091.2 478.0 L1084.0 503.0 L1076.9 538.8 L1069.7 574.6 L1064.3 596.0 L1055.4 628.4 L1042.8 681.8" fill="none" stroke="#f9d59c" stroke-width="5.9" stroke-linejoin="round" stroke-linecap="round"/><path d="M1207.7 65.0 L1206.0 150.0 L1199.7 244.0 L1198.7 275.0 L1195.2 328.8 L1191.6 355.6 L1188.0 418.4 L1180.8 485.0 L1176.3 533.4 L1174.5 592.5 L1170.0 628.4 L1167.4 664.2" fill="none" stroke="#f9d59c" stroke-width="6.4" stroke-linejoin="round" stroke-linecap="round"/><path d="M1512.0 103.5 L1463.0 124.0 L1427.0 138.5 L1380.5 154.6 L1355.4 176.0 L1333.9 204.8 L1325.0 226.3 L1324.0 275.0 L1317.7 319.8 L1312.4 364.6 L1308.8 418.4 L1303.4 485.0 L1302.5 495.8 L1308.8 511.9 L1315.0 531.6 L1314.2 592.5 L1309.7 610.4 L1310.2 639.0" fill="none" stroke="#f9d59c" stroke-width="7.4" stroke-linejoin="round" stroke-linecap="round"/><path d="M1598.0 63.0 L1569.3 70.4 L1547.8 81.0 L1512.0 103.5" fill="none" stroke="#f9d59c" stroke-width="7.4" stroke-linejoin="round" stroke-linecap="round"/><path d="M1380.5 154.6 L1381.4 190.4 L1384.0 226.3 L1388.5 253.0 L1391.0 275.0 L1393.0 310.8 L1398.4 355.6 L1402.0 371.8 L1402.0 391.5 L1404.7 418.4 L1403.8 454.2 L1400.2 485.0 L1398.4 511.9 L1389.4 556.7 L1378.7 601.5 L1368.0 637.3 L1353.6 671.4" fill="none" stroke="#f9d59c" stroke-width="7.4" stroke-linejoin="round" stroke-linecap="round"/><path d="M912.0 326.0 L983.7 334.0 L1091.0 344.0 L1118.0 345.8 L1212.0 353.0 L1312.4 362.8 L1384.0 371.8 L1402.0 375.4 L1512.0 380.7 L1583.7 384.3 L1628.5 385.2 L1700.0 379.0 L1775.4 373.6 L1804.0 372.7" fill="none" stroke="#f9d59c" stroke-width="8.4" stroke-linejoin="round" stroke-linecap="round"/><path d="M1782.5 65.0 L1781.5 110.0 L1780.0 150.0 L1780.0 275.0 L1780.0 346.7 L1778.1 400.4 L1771.9 454.2 L1766.5 485.0 L1764.7 504.7 L1762.0 531.6" fill="none" stroke="#f9d59c" stroke-width="7.9" stroke-linejoin="round" stroke-linecap="round"/><path d="M1405.5 451.5 L1512.0 466.8 L1542.5 471.2 L1583.7 481.0 L1619.5 485.0 L1691.2 494.0 L1763.0 503.8 L1790.0 507.5" fill="none" stroke="#f9d59c" stroke-width="6.9" stroke-linejoin="round" stroke-linecap="round"/><path d="M1402.0 463.0 L1373.3 481.0 L1337.5 492.2 L1303.4 494.9" fill="none" stroke="#f9d59c" stroke-width="6.4" stroke-linejoin="round" stroke-linecap="round"/><path d="M1302.5 495.8 L1289.0 517.3 L1282.0 544.0 L1271.0 574.6 L1255.0 590.7 L1226.3 594.3 L1212.0 593.4 L1136.0 589.0 L1066.0 589.0 L1046.4 589.8 L983.7 592.5 L912.0 598.0" fill="none" stroke="#f9d59c" stroke-width="8.4" stroke-linejoin="round" stroke-linecap="round"/><path d="M1247.8 601.5 L1265.8 624.8 L1308.8 641.0 L1337.5 662.4 L1355.4 675.0 L1366.0 681.8" fill="none" stroke="#f9d59c" stroke-width="6.9" stroke-linejoin="round" stroke-linecap="round"/><path d="M999.8 594.3 L994.4 628.4 L987.3 681.8" fill="none" stroke="#f9d59c" stroke-width="5.9" stroke-linejoin="round" stroke-linecap="round"/><path d="M1461.0 85.0 L1452.0 98.0 L1440.0 110.0 L1434.0 125.0 L1433.0 134.0 L1427.0 138.5" fill="none" stroke="#f9d59c" stroke-width="3.7" stroke-linejoin="round" stroke-linecap="round"/><path d="M1463.0 88.0 L1466.0 95.0 L1463.0 102.0 L1452.0 110.0 L1443.0 122.0 L1440.0 132.0" fill="none" stroke="#f9d59c" stroke-width="3.7" stroke-linejoin="round" stroke-linecap="round"/><circle cx="1402" cy="372.500" r="11.500" fill="#f9d59c"/><path d="M1228 588L1245 584L1258 588L1258 598L1250 604L1232 602z" fill="#f9d59c" stroke="#f9d59c" stroke-width="2.400" stroke-linejoin="round"/><path d="M912 215.500L934 214.500L941 222L939 234L912 242z" fill="#f9d59c" stroke="#f9d59c" stroke-width="1.500" stroke-linejoin="round"/><path d="M1124 84L1150 84L1144 100L1128 102z" fill="#f9d59c"/><path d="M912.0 222.0 L958.6 201.0 L1001.6 169.0 L1046.4 135.0 L1080.5 109.8 L1127.0 95.5 L1137.8 90.0" fill="none" stroke="#ffe4ae" stroke-width="6.6" stroke-linejoin="round" stroke-linecap="round"/><path d="M1134.0 88.7 L1212.0 93.7 L1301.6 100.0 L1332.0 105.3 L1364.0 117.0 L1378.7 149.0 L1380.5 154.6" fill="none" stroke="#ffe4ae" stroke-width="6.6" stroke-linejoin="round" stroke-linecap="round"/><path d="M912.0 237.0 L989.0 239.7 L1118.0 247.8 L1212.0 257.7 L1283.7 262.0 L1366.0 269.3 L1390.0 272.0" fill="none" stroke="#ffe4ae" stroke-width="5.6" stroke-linejoin="round" stroke-linecap="round"/><path d="M1136.0 65.0 L1134.0 101.0 L1127.0 172.5 L1122.6 244.0 L1119.0 275.0 L1118.0 346.7 L1118.0 400.4 L1120.8 427.3 L1118.0 463.0 L1114.5 476.0" fill="none" stroke="#ffe4ae" stroke-width="5.1" stroke-linejoin="round" stroke-linecap="round"/><path d="M1089.4 476.0 L1116.3 476.0" fill="none" stroke="#ffe4ae" stroke-width="4.6" stroke-linejoin="round" stroke-linecap="round"/><path d="M1091.2 478.0 L1084.0 503.0 L1076.9 538.8 L1069.7 574.6 L1064.3 596.0 L1055.4 628.4 L1042.8 681.8" fill="none" stroke="#ffe4ae" stroke-width="4.1" stroke-linejoin="round" stroke-linecap="round"/><path d="M1207.7 65.0 L1206.0 150.0 L1199.7 244.0 L1198.7 275.0 L1195.2 328.8 L1191.6 355.6 L1188.0 418.4 L1180.8 485.0 L1176.3 533.4 L1174.5 592.5 L1170.0 628.4 L1167.4 664.2" fill="none" stroke="#ffe4ae" stroke-width="4.6" stroke-linejoin="round" stroke-linecap="round"/><path d="M1512.0 103.5 L1463.0 124.0 L1427.0 138.5 L1380.5 154.6 L1355.4 176.0 L1333.9 204.8 L1325.0 226.3 L1324.0 275.0 L1317.7 319.8 L1312.4 364.6 L1308.8 418.4 L1303.4 485.0 L1302.5 495.8 L1308.8 511.9 L1315.0 531.6 L1314.2 592.5 L1309.7 610.4 L1310.2 639.0" fill="none" stroke="#ffe4ae" stroke-width="5.6" stroke-linejoin="round" stroke-linecap="round"/><path d="M1598.0 63.0 L1569.3 70.4 L1547.8 81.0 L1512.0 103.5" fill="none" stroke="#ffe4ae" stroke-width="5.6" stroke-linejoin="round" stroke-linecap="round"/><path d="M1380.5 154.6 L1381.4 190.4 L1384.0 226.3 L1388.5 253.0 L1391.0 275.0 L1393.0 310.8 L1398.4 355.6 L1402.0 371.8 L1402.0 391.5 L1404.7 418.4 L1403.8 454.2 L1400.2 485.0 L1398.4 511.9 L1389.4 556.7 L1378.7 601.5 L1368.0 637.3 L1353.6 671.4" fill="none" stroke="#ffe4ae" stroke-width="5.6" stroke-linejoin="round" stroke-linecap="round"/><path d="M912.0 326.0 L983.7 334.0 L1091.0 344.0 L1118.0 345.8 L1212.0 353.0 L1312.4 362.8 L1384.0 371.8 L1402.0 375.4 L1512.0 380.7 L1583.7 384.3 L1628.5 385.2 L1700.0 379.0 L1775.4 373.6 L1804.0 372.7" fill="none" stroke="#ffe4ae" stroke-width="6.6" stroke-linejoin="round" stroke-linecap="round"/><path d="M1782.5 65.0 L1781.5 110.0 L1780.0 150.0 L1780.0 275.0 L1780.0 346.7 L1778.1 400.4 L1771.9 454.2 L1766.5 485.0 L1764.7 504.7 L1762.0 531.6" fill="none" stroke="#ffe4ae" stroke-width="6.1" stroke-linejoin="round" stroke-linecap="round"/><path d="M1405.5 451.5 L1512.0 466.8 L1542.5 471.2 L1583.7 481.0 L1619.5 485.0 L1691.2 494.0 L1763.0 503.8 L1790.0 507.5" fill="none" stroke="#ffe4ae" stroke-width="5.1" stroke-linejoin="round" stroke-linecap="round"/><path d="M1402.0 463.0 L1373.3 481.0 L1337.5 492.2 L1303.4 494.9" fill="none" stroke="#ffe4ae" stroke-width="4.6" stroke-linejoin="round" stroke-linecap="round"/><path d="M1302.5 495.8 L1289.0 517.3 L1282.0 544.0 L1271.0 574.6 L1255.0 590.7 L1226.3 594.3 L1212.0 593.4 L1136.0 589.0 L1066.0 589.0 L1046.4 589.8 L983.7 592.5 L912.0 598.0" fill="none" stroke="#ffe4ae" stroke-width="6.6" stroke-linejoin="round" stroke-linecap="round"/><path d="M1247.8 601.5 L1265.8 624.8 L1308.8 641.0 L1337.5 662.4 L1355.4 675.0 L1366.0 681.8" fill="none" stroke="#ffe4ae" stroke-width="5.1" stroke-linejoin="round" stroke-linecap="round"/><path d="M999.8 594.3 L994.4 628.4 L987.3 681.8" fill="none" stroke="#ffe4ae" stroke-width="4.1" stroke-linejoin="round" stroke-linecap="round"/><path d="M1461.0 85.0 L1452.0 98.0 L1440.0 110.0 L1434.0 125.0 L1433.0 134.0 L1427.0 138.5" fill="none" stroke="#ffe4ae" stroke-width="2.8" stroke-linejoin="round" stroke-linecap="round"/><path d="M1463.0 88.0 L1466.0 95.0 L1463.0 102.0 L1452.0 110.0 L1443.0 122.0 L1440.0 132.0" fill="none" stroke="#ffe4ae" stroke-width="2.8" stroke-linejoin="round" stroke-linecap="round"/><circle cx="1402" cy="372.500" r="10.400" fill="#ffe4ae"/><path d="M1228 588L1245 584L1258 588L1258 598L1250 604L1232 602z" fill="#ffe4ae"/><path d="M912 216.500L933.500 215.500L939.500 222.500L938 233L912 241z" fill="#ffe4ae"/><path d="M1125.500 85L1148.500 85L1143 99L1129 101z" fill="#ffe4ae"/><path d="M1461.0 65.0 L1457.5 92.0 L1446.8 127.7 L1438.7 172.5 L1438.7 217.3 L1446.8 253.0 L1448.6 275.0 L1457.5 319.8 L1462.0 364.6 L1462.9 418.4 L1463.0 485.0 L1452.0 529.8 L1432.4 574.6 L1420.0 619.4 L1411.0 681.8" fill="none" stroke="#f9a863" stroke-width="7.500" stroke-linejoin="round"/><path d="M1461.0 65.0 L1457.5 92.0 L1446.8 127.7 L1438.7 172.5 L1438.7 217.3 L1446.8 253.0 L1448.6 275.0 L1457.5 319.8 L1462.0 364.6 L1462.9 418.4 L1463.0 485.0 L1452.0 529.8 L1432.4 574.6 L1420.0 619.4 L1411.0 681.8" fill="none" stroke="#fdb573" stroke-width="5.500" stroke-linejoin="round"/><path d="M1131.5 65.0 L1127.0 118.8 L1120.0 226.0 L1114.5 293.0 L1112.7 328.8 L1109.0 382.5 L1108.2 414.8 L1100.0 436.3 L1089.4 475.7 L1082.3 483.0 L1068.0 479.3 L1039.2 431.0" fill="none" stroke="#8a8a8a" stroke-width="1.700" stroke-linejoin="round"/><path d="M1131.5 65.0 L1127.0 118.8 L1120.0 226.0 L1114.5 293.0 L1112.7 328.8 L1109.0 382.5 L1108.2 414.8 L1100.0 436.3 L1089.4 475.7 L1082.3 483.0 L1068.0 479.3 L1039.2 431.0" fill="none" stroke="#ffffff" stroke-width="1.300" stroke-dasharray="8 11" stroke-linejoin="round"/><path d="M912.0 370.0 L980.0 465.0 L1026.7 485.0 L1060.0 494.0 L1075.0 500.0 L1084.0 488.0" fill="none" stroke="#8a8a8a" stroke-width="1.700" stroke-linejoin="round"/><path d="M912.0 370.0 L980.0 465.0 L1026.7 485.0 L1060.0 494.0 L1075.0 500.0 L1084.0 488.0" fill="none" stroke="#ffffff" stroke-width="1.300" stroke-dasharray="8 11" stroke-linejoin="round"/><path d="M1477.2 65.0 L1480.8 109.8 L1484.4 172.5 L1485.3 275.0 L1486.2 382.5 L1480.8 485.0 L1473.7 529.8 L1459.3 601.5 L1443.2 681.8" fill="none" stroke="#8a8a8a" stroke-width="1.700" stroke-linejoin="round"/><path d="M1477.2 65.0 L1480.8 109.8 L1484.4 172.5 L1485.3 275.0 L1486.2 382.5 L1480.8 485.0 L1473.7 529.8 L1459.3 601.5 L1443.2 681.8" fill="none" stroke="#ffffff" stroke-width="1.300" stroke-dasharray="8 11" stroke-linejoin="round"/><path d="M1082.0 492.0 L1069.7 529.8 L1067.9 544.0 L1046.4 571.0 L1040.0 578.0 L1042.8 610.5 L1035.6 637.3 L1024.0 681.8" fill="none" stroke="#8a8a8a" stroke-width="1.700" stroke-linejoin="round"/><path d="M1082.0 492.0 L1069.7 529.8 L1067.9 544.0 L1046.4 571.0 L1040.0 578.0 L1042.8 610.5 L1035.6 637.3 L1024.0 681.8" fill="none" stroke="#ffffff" stroke-width="1.300" stroke-dasharray="8 11" stroke-linejoin="round"/><path d="M1067.9 544.0 L1055.4 583.5 L1050.0 610.5 L1046.4 628.4 L1038.3 681.8" fill="none" stroke="#8a8a8a" stroke-width="1.700" stroke-linejoin="round"/><path d="M1067.9 544.0 L1055.4 583.5 L1050.0 610.5 L1046.4 628.4 L1038.3 681.8" fill="none" stroke="#ffffff" stroke-width="1.300" stroke-dasharray="8 11" stroke-linejoin="round"/><path d="M1005.0 498.5 L1021.3 503.8 L1033.9 502.0" fill="none" stroke="#8a8a8a" stroke-width="1.700" stroke-linejoin="round"/><path d="M1005.0 498.5 L1021.3 503.8 L1033.9 502.0" fill="none" stroke="#ffffff" stroke-width="1.300" stroke-dasharray="8 11" stroke-linejoin="round"/><rect x="1332.4" y="101.7" width="36.9" height="14.0" rx="1.500" fill="#fb8374" stroke="#fff" stroke-width="1"/><text x="1350.8" y="112.6" text-anchor="middle" font-size="10.800" fill="#fff" fill-opacity=".88">G107</text><rect x="1455.7" y="112.5" width="36.8" height="14.0" rx="1.500" fill="#fb8374" stroke="#fff" stroke-width="1"/><text x="1474.1" y="123.4" text-anchor="middle" font-size="10.800" fill="#fff" fill-opacity=".88">G514</text><rect x="1760.2" y="130.4" width="37.1" height="14.7" rx="1.500" fill="#fb8374" stroke="#fff" stroke-width="1"/><text x="1778.8" y="141.7" text-anchor="middle" font-size="10.800" fill="#fff" fill-opacity=".88">G107</text><rect x="1751.2" y="458.7" width="36.8" height="14.3" rx="1.500" fill="#fb8374" stroke="#fff" stroke-width="1"/><text x="1769.6" y="469.8" text-anchor="middle" font-size="10.800" fill="#fff" fill-opacity=".88">G107</text><rect x="1723.8" y="659.2" width="36.4" height="14.3" rx="1.500" fill="#fb8374" stroke="#fff" stroke-width="1"/><text x="1742.0" y="670.2" text-anchor="middle" font-size="10.800" fill="#fff" fill-opacity=".88">G107</text><rect x="1779.0" y="502.0" width="33.0" height="13.8" rx="1.500" fill="#fb8374" stroke="#fff" stroke-width="1"/><text x="1795.5" y="512.8" text-anchor="middle" font-size="10.800" fill="#fff" fill-opacity=".88">G30</text><rect x="1447.0" y="69.0" width="25.8" height="14.0" rx="1.500" fill="#43c8a6" stroke="#fff" stroke-width="1"/><rect x="1447.5" y="69.5" width="24.8" height="2.800" fill="#e8505a"/><text x="1459.9" y="81.1" text-anchor="middle" font-size="10.800" fill="#fff" fill-opacity=".88">G4</text><rect x="1408.6" y="603.8" width="26.2" height="14.7" rx="1.500" fill="#43c8a6" stroke="#fff" stroke-width="1"/><rect x="1409.1" y="604.3" width="25.2" height="2.800" fill="#e8505a"/><text x="1421.7" y="616.2" text-anchor="middle" font-size="10.800" fill="#fff" fill-opacity=".88">G4</text><rect x="1315.0" y="646.3" width="34.6" height="14.3" rx="1.500" fill="#f8a962" stroke="#fff" stroke-width="1"/><text x="1332.3" y="657.4" text-anchor="middle" font-size="10.800" fill="#fff" fill-opacity=".88">S313</text><text x="1106.5" y="106.0" font-size="17.5" fill="#333" text-anchor="middle" stroke="#fff" stroke-width="3" stroke-linejoin="round" paint-order="stroke" transform="rotate(-20 1106.5 106.0)">北环路</text><text x="1019.0" y="195.0" font-size="18" fill="#555" text-anchor="start" stroke="#fff" stroke-width="3" stroke-linejoin="round" paint-order="stroke">复</text><text x="1058.5" y="195.0" font-size="18" fill="#555" text-anchor="start" stroke="#fff" stroke-width="3" stroke-linejoin="round" paint-order="stroke">区</text><text x="1040.0" y="195.0" font-size="14" fill="#777" text-anchor="start" stroke="#fff" stroke-width="3" stroke-linejoin="round" paint-order="stroke">.</text><text x="1160.5" y="209.5" font-size="18" fill="#555" text-anchor="start" stroke="#fff" stroke-width="3" stroke-linejoin="round" paint-order="stroke">丛</text><text x="1201.0" y="209.5" font-size="18" fill="#555" text-anchor="start" stroke="#fff" stroke-width="3" stroke-linejoin="round" paint-order="stroke">区</text><text x="1366.0" y="275.8" font-size="22.5" fill="#444" text-anchor="start" stroke="#fff" stroke-width="3" stroke-linejoin="round" paint-order="stroke">邯</text><text x="1413.5" y="275.8" font-size="22.5" fill="#444" text-anchor="start" stroke="#fff" stroke-width="3" stroke-linejoin="round" paint-order="stroke">市</text><text x="1389.0" y="275.0" font-size="14" fill="#777" text-anchor="start" stroke="#fff" stroke-width="3" stroke-linejoin="round" paint-order="stroke">.</text><text x="1335.0" y="451.0" font-size="18" fill="#555" text-anchor="start" stroke="#fff" stroke-width="3" stroke-linejoin="round" paint-order="stroke">邯</text><text x="1374.5" y="451.0" font-size="18" fill="#555" text-anchor="start" stroke="#fff" stroke-width="3" stroke-linejoin="round" paint-order="stroke">区</text><text x="1469.0" y="386.0" font-size="18" fill="#333" text-anchor="start" stroke="#fff" stroke-width="3" stroke-linejoin="round" paint-order="stroke">人民东路</text><text x="1066.0" y="594.0" font-size="18" fill="#333" text-anchor="start" stroke="#fff" stroke-width="3" stroke-linejoin="round" paint-order="stroke">南环路</text><text x="1186.5" y="132.8" font-size="15.5" fill="#3d9bd8" text-anchor="start" stroke="#fff" stroke-width="3" stroke-linejoin="round" paint-order="stroke">河北司法警官</text><text x="1186.5" y="148.5" font-size="15.5" fill="#3d9bd8" text-anchor="start" stroke="#fff" stroke-width="3" stroke-linejoin="round" paint-order="stroke">职业学院</text><text x="1137.0" y="587.0" font-size="15.2" fill="#3d9bd8" text-anchor="start" stroke="#fff" stroke-width="3" stroke-linejoin="round" paint-order="stroke">邯郸学院</text><text x="1137.0" y="603.5" font-size="15.2" fill="#3d9bd8" text-anchor="start" stroke="#fff" stroke-width="3" stroke-linejoin="round" paint-order="stroke">(西校区)</text><text x="1274.0" y="567.0" font-size="15.5" fill="#3d9bd8" text-anchor="start" stroke="#fff" stroke-width="3" stroke-linejoin="round" paint-order="stroke">河北工程大</text><text x="1274.0" y="583.5" font-size="15.5" fill="#3d9bd8" text-anchor="start" stroke="#fff" stroke-width="3" stroke-linejoin="round" paint-order="stroke">学科信学院</text><text x="1716.0" y="105.3" font-size="15" fill="#3d9bd8" text-anchor="start" stroke="#fff" stroke-width="3" stroke-linejoin="round" paint-order="stroke">(东校区)</text><text x="1797.5" y="85.5" font-size="15" fill="#3d9bd8" text-anchor="start" stroke="#fff" stroke-width="3" stroke-linejoin="round" paint-order="stroke">学</text><text x="1113.0" y="277.0" font-size="14.5" fill="#2f9e74" text-anchor="start" stroke="#fff" stroke-width="3" stroke-linejoin="round" paint-order="stroke">赵苑公园</text><text x="1191.6" y="323.0" font-size="14.5" fill="#2f9e74" text-anchor="start" stroke="#fff" stroke-width="3" stroke-linejoin="round" paint-order="stroke">丛台公园</text><text x="1316.8" y="342.0" font-size="15.2" fill="#2f9e74" text-anchor="start" stroke="#fff" stroke-width="3" stroke-linejoin="round" paint-order="stroke">龙湖公园</text><text x="909.5" y="573.5" font-size="15.8" fill="#2f9e74" text-anchor="start" stroke="#fff" stroke-width="3" stroke-linejoin="round" paint-order="stroke">赵王城遗址公园</text><text x="1119.0" y="679.5" font-size="15.2" fill="#2f9e74" text-anchor="start" stroke="#fff" stroke-width="3" stroke-linejoin="round" paint-order="stroke">南湖湿地公园</text><text x="903.0" y="274.5" font-size="15.5" fill="#2f9e74" text-anchor="start" stroke="#fff" stroke-width="3" stroke-linejoin="round" paint-order="stroke">邯园博园</text><text x="1122.6" y="406.5" font-size="15.2" fill="#5b8ef5" text-anchor="start" stroke="#fff" stroke-width="3" stroke-linejoin="round" paint-order="stroke">邯郸站</text><text x="1504.5" y="304.0" font-size="15.2" fill="#5b8ef5" text-anchor="start" stroke="#fff" stroke-width="3" stroke-linejoin="round" paint-order="stroke">邯郸东站</text><text x="1340.0" y="373.5" font-size="15.2" fill="#b070f0" text-anchor="start" stroke="#fff" stroke-width="3" stroke-linejoin="round" paint-order="stroke">美乐城</text><text x="1566.7" y="484.0" font-size="15.5" fill="#b070f0" text-anchor="start" stroke="#fff" stroke-width="3" stroke-linejoin="round" paint-order="stroke">新兴时代广场</text><g transform="translate(1172.2 133.0)"><path d="M0 15.299999999999999L-3.800 10.299999999999999H3.800z" fill="#38b5ea"/><circle r="11.7" fill="#38b5ea"/><circle r="11.7" fill="url(#pg)"/><path d="M0-5.200l8 3.600-8 3.600-8-3.600z" fill="#fff"/><path d="M-4.600 1v3.400c1.300 1.300 2.900 1.900 4.600 1.900s3.300-.6 4.600-1.900V1L0 3.300z" fill="#fff"/><path d="M7-1.400v4.500" stroke="#fff" stroke-width="1"/></g><g transform="translate(1697.0 89.2)"><path d="M0 15.299999999999999L-3.800 10.299999999999999H3.800z" fill="#38b5ea"/><circle r="11.7" fill="#38b5ea"/><circle r="11.7" fill="url(#pg)"/><path d="M0-5.200l8 3.600-8 3.600-8-3.600z" fill="#fff"/><path d="M-4.600 1v3.400c1.300 1.300 2.900 1.900 4.600 1.900s3.300-.6 4.600-1.900V1L0 3.300z" fill="#fff"/><path d="M7-1.400v4.500" stroke="#fff" stroke-width="1"/></g><g transform="translate(1260.0 567.4)"><path d="M0 15.299999999999999L-3.800 10.299999999999999H3.800z" fill="#38b5ea"/><circle r="11.7" fill="#38b5ea"/><circle r="11.7" fill="url(#pg)"/><path d="M0-5.200l8 3.600-8 3.600-8-3.600z" fill="#fff"/><path d="M-4.600 1v3.400c1.300 1.300 2.900 1.900 4.600 1.900s3.300-.6 4.600-1.900V1L0 3.300z" fill="#fff"/><path d="M7-1.400v4.500" stroke="#fff" stroke-width="1"/></g><g transform="translate(1217.4 587.5)"><path d="M0 15.299999999999999L-3.800 10.299999999999999H3.800z" fill="#38b5ea"/><circle r="11.7" fill="#38b5ea"/><circle r="11.7" fill="url(#pg)"/><path d="M0-5.200l8 3.600-8 3.600-8-3.600z" fill="#fff"/><path d="M-4.600 1v3.400c1.300 1.300 2.900 1.900 4.600 1.900s3.300-.6 4.600-1.900V1L0 3.300z" fill="#fff"/><path d="M7-1.400v4.500" stroke="#fff" stroke-width="1"/></g><g transform="translate(1096.3 272.0)"><path d="M0 15.299999999999999L-3.800 10.299999999999999H3.800z" fill="#2fbf77"/><circle r="11.7" fill="#2fbf77"/><circle r="11.7" fill="url(#pg)"/><path d="M-3-6.500l3.300 4.700h-1.800l2.700 4h-3.200v3.300h-2v-3.300h-3.200l2.700-4h-1.800z" fill="#fff"/><path d="M3.500-3.500l2.400 3.600h-1.300l2 3h-2.300v2.400h-1.600v-2.400h-2.300l2-3h-1.300z" fill="#fff"/></g><g transform="translate(1175.8 314.8)"><path d="M0 15.299999999999999L-3.800 10.299999999999999H3.800z" fill="#2fbf77"/><circle r="11.7" fill="#2fbf77"/><circle r="11.7" fill="url(#pg)"/><path d="M-3-6.500l3.300 4.700h-1.800l2.700 4h-3.200v3.300h-2v-3.300h-3.200l2.700-4h-1.800z" fill="#fff"/><path d="M3.500-3.500l2.400 3.600h-1.300l2 3h-2.300v2.400h-1.600v-2.400h-2.300l2-3h-1.300z" fill="#fff"/></g><g transform="translate(1302.1 334.1)"><path d="M0 15.299999999999999L-3.800 10.299999999999999H3.800z" fill="#2fbf77"/><circle r="11.7" fill="#2fbf77"/><circle r="11.7" fill="url(#pg)"/><circle cx="-3.200" cy="-3" r="3" fill="#fff"/><rect x="-3.800" y="-1" width="1.300" height="6" fill="#fff"/><rect x="-6.500" y="4.600" width="13" height="1.400" fill="#fff"/><rect x="-.8" y="-.5" width="7.500" height="1.500" fill="#fff"/><rect x="-.8" y="2" width="7.500" height="1.500" fill="#fff"/></g><g transform="translate(1164.3 649.9)"><path d="M0 15.299999999999999L-3.800 10.299999999999999H3.800z" fill="#2fbf77"/><circle r="11.7" fill="#2fbf77"/><circle r="11.7" fill="url(#pg)"/><circle cx="-3.200" cy="-3" r="3" fill="#fff"/><rect x="-3.800" y="-1" width="1.300" height="6" fill="#fff"/><rect x="-6.500" y="4.600" width="13" height="1.400" fill="#fff"/><rect x="-.8" y="-.5" width="7.500" height="1.500" fill="#fff"/><rect x="-.8" y="2" width="7.500" height="1.500" fill="#fff"/></g><g transform="translate(1325.8 365.5)"><path d="M0 15.299999999999999L-3.800 10.299999999999999H3.800z" fill="#b06ef3"/><circle r="11.7" fill="#b06ef3"/><circle r="11.7" fill="url(#pg)"/><path d="M-5.500-5.500h11l.8 10.500a1.200 1.200 0 0 1-1.200 1.300H-5a1.200 1.200 0 0 1-1.200-1.300z" fill="#fff"/><path d="M-2.800-3.500c0 1.800 1.200 3 2.800 3s2.800-1.200 2.800-3" fill="none" stroke="#b06ef3" stroke-width="1.200"/></g><g transform="translate(1552.9 474.8)"><path d="M0 15.299999999999999L-3.800 10.299999999999999H3.800z" fill="#b06ef3"/><circle r="11.7" fill="#b06ef3"/><circle r="11.7" fill="url(#pg)"/><path d="M-6.500 5.800c.3-3.500 2-5.300 4.500-5.800l-.6-2.600h5.200L2 0c2.500.5 4.200 2.300 4.500 5.800z" fill="#fff"/><rect x="-4.300" y="-4.600" width="8.600" height="1.700" rx=".8" fill="#fff"/><rect x="-.7" y="-6.800" width="1.400" height="2.500" fill="#fff"/></g><g transform="translate(1096.2 387.5)"><path d="M8.300 22.500h7l-3.500 4.600z" fill="#4a86f7"/><rect width="23.600" height="22.800" rx="3.500" fill="#5c93fb"/><path d="M6.300 16.500v-5.500a5.500 5.500 0 0 1 11 0v5.500h-2.600v-5.300a2.900 2.900 0 0 0-5.800 0v5.300z" fill="#fff"/><rect x="4.300" y="16" width="15" height="2.300" fill="#fff"/><rect x="10.700" y="12" width="2.200" height="4.500" fill="#fff"/></g><g transform="translate(1479.5 285.4)"><path d="M8.300 22.500h7l-3.500 4.600z" fill="#4a86f7"/><rect width="23.600" height="22.800" rx="3.500" fill="#5c93fb"/><path d="M6.300 16.500v-5.500a5.500 5.500 0 0 1 11 0v5.500h-2.600v-5.300a2.900 2.900 0 0 0-5.800 0v5.300z" fill="#fff"/><rect x="4.300" y="16" width="15" height="2.300" fill="#fff"/><rect x="10.700" y="12" width="2.200" height="4.500" fill="#fff"/></g><use href="#m" x="1049.6" y="201.6"/><use href="#m" x="1144.0" y="206.6"/><use href="#m" x="1190.0" y="216.4"/><use href="#m" x="1312.7" y="118.8"/><use href="#m" x="1237.0" y="74.9"/><use href="#m" x="1401.0" y="281.3"/><use href="#m" x="1098.7" y="326.6"/><use href="#m" x="1567.2" y="334.1"/><use href="#m" x="1712.2" y="288.4"/><use href="#m" x="1364.7" y="458.7"/><use href="#m" x="1176.3" y="533.7"/><use href="#m" x="1512.0" y="513.7"/><g filter="url(#sh)"><circle cx="954.100" cy="103.500" r="25.500" fill="url(#pan)" stroke="#9a9ca3" stroke-width="1"/></g><g fill="none" stroke="#3a6cd9" stroke-width="2.900" stroke-linecap="round" stroke-linejoin="round"><path d="M948 89.500l6.100-6 6.100 6M948 117.500l6.100 6 6.100-6M940 97.500l-6 6 6 6M968.200 97.500l6 6-6 6"/></g><rect x="950.300" y="158" width="8" height="140" fill="#f6f6f7" stroke="#8a8a8e" stroke-width="1"/><line x1="951" x2="957.500" y1="164.0" y2="164.0" stroke="#d2d4da" stroke-width=".8"/><line x1="951" x2="957.500" y1="170.2" y2="170.2" stroke="#d2d4da" stroke-width=".8"/><line x1="951" x2="957.500" y1="176.4" y2="176.4" stroke="#d2d4da" stroke-width=".8"/><line x1="951" x2="957.500" y1="182.6" y2="182.6" stroke="#d2d4da" stroke-width=".8"/><line x1="951" x2="957.500" y1="188.8" y2="188.8" stroke="#d2d4da" stroke-width=".8"/><line x1="951" x2="957.500" y1="195.0" y2="195.0" stroke="#d2d4da" stroke-width=".8"/><line x1="951" x2="957.500" y1="201.2" y2="201.2" stroke="#d2d4da" stroke-width=".8"/><line x1="951" x2="957.500" y1="207.4" y2="207.4" stroke="#d2d4da" stroke-width=".8"/><rect x="950.800" y="221" width="7" height="76" fill="#8fb2f7"/><line x1="951" x2="957.500" y1="227.0" y2="227.0" stroke="#7b9fec" stroke-width=".8"/><line x1="951" x2="957.500" y1="233.2" y2="233.2" stroke="#7b9fec" stroke-width=".8"/><line x1="951" x2="957.500" y1="239.4" y2="239.4" stroke="#7b9fec" stroke-width=".8"/><line x1="951" x2="957.500" y1="245.6" y2="245.6" stroke="#7b9fec" stroke-width=".8"/><line x1="951" x2="957.500" y1="251.8" y2="251.8" stroke="#7b9fec" stroke-width=".8"/><line x1="951" x2="957.500" y1="258.0" y2="258.0" stroke="#7b9fec" stroke-width=".8"/><line x1="951" x2="957.500" y1="264.2" y2="264.2" stroke="#7b9fec" stroke-width=".8"/><line x1="951" x2="957.500" y1="270.4" y2="270.4" stroke="#7b9fec" stroke-width=".8"/><line x1="951" x2="957.500" y1="276.6" y2="276.6" stroke="#7b9fec" stroke-width=".8"/><line x1="951" x2="957.500" y1="282.8" y2="282.8" stroke="#7b9fec" stroke-width=".8"/><line x1="951" x2="957.500" y1="289.0" y2="289.0" stroke="#7b9fec" stroke-width=".8"/><line x1="951" x2="957.500" y1="295.2" y2="295.2" stroke="#7b9fec" stroke-width=".8"/><g filter="url(#sh)"><rect x="942.500" y="137.500" width="23" height="22.500" rx="3" fill="url(#btn)" stroke="#9a9ca3" stroke-width="1"/><rect x="942.500" y="295.500" width="23" height="22" rx="3" fill="url(#btn)" stroke="#9a9ca3" stroke-width="1"/><rect x="942.500" y="210.500" width="23" height="12" rx="3" fill="url(#btn)" stroke="#9a9ca3" stroke-width="1"/></g><path d="M948.500 148.800h11M954 143.300v11M948.800 306.500h10.500M948.300 216.500h11.500" stroke="#3a6cd9" stroke-width="2.300" fill="none"/><rect x="1711" y="73.500" width="86.300" height="32" rx="4" fill="#000" fill-opacity=".06"/><rect x="1711" y="73" width="86.300" height="31.800" rx="4" fill="#fff"/><text x="1722.500" y="95.500" font-size="18" fill="#444">全屏</text><path d="M1768 85v-4.500h4.500M1780 80.500h4.500V85M1784.500 92.500V97H1780M1772.500 97H1768v-4.500" fill="none" stroke="#555" stroke-width="1.600"/></svg></div>

<!-- RIGHT CARDS -->
<div class="card" style="left:1836px;top:52px;width:296px;height:193px" id="r1"><svg class="ic" style="left:62px;top:32px;height:43px" viewBox="0 0 42 43"><ellipse cx="21" cy="21.500" rx="21" ry="21.500" fill="#f5809f"/><rect x="10" y="11.600" width="23" height="18.800" rx=".8" fill="#fff"/><rect x="14.400" y="8.500" width="5.600" height="7.500" rx="2.800" fill="#f5809f"/><rect x="23.500" y="8.500" width="5.600" height="7.500" rx="2.800" fill="#f5809f"/><rect x="16" y="8.800" width="2.500" height="5.600" rx="1.250" fill="#fff"/><rect x="25.100" y="8.800" width="2.500" height="5.600" rx="1.250" fill="#fff"/><path d="M16.300 22.300l3.800 3.800 6.900-7" fill="none" stroke="#f5809f" stroke-width="2.300" stroke-linecap="round" stroke-linejoin="round"/></svg><div class="lb" style="left:124px;top:43px">今日出勤人数</div><div class="num big" style="top:80px">16169<small>人</small></div><div class="bdg" style="left:90px;top:128px;width:116px">出勤率33.92%</div></div>
<div class="card" style="left:2148px;top:52px;width:295px;height:193px" id="r2"><svg class="ic" style="left:81px;top:32px" viewBox="0 0 42 42"><circle cx="21" cy="21" r="21" fill="#c091fd"/><rect x="9.800" y="11.800" width="22.800" height="4.400" rx=".5" fill="#fff"/><rect x="9.800" y="18.800" width="22.800" height="4.900" rx=".5" fill="#fff"/><rect x="9.800" y="26.100" width="22.800" height="4.400" rx=".5" fill="#fff"/><rect x="12.400" y="13.500" width="4.100" height="1" fill="#c091fd" opacity=".7"/><rect x="12.400" y="20.800" width="4.100" height="1" fill="#c091fd" opacity=".7"/><rect x="12.400" y="27.800" width="4.100" height="1" fill="#c091fd" opacity=".7"/></svg><div class="lb" style="left:141px;top:43px">设备总数</div><div class="num big" style="top:80px">1117<small>台</small></div><div class="bdg" style="left:103px;top:128px;width:89px">离线196台</div></div>

<!-- CATEGORY -->
<div class="card" style="left:1836px;top:269px;width:607px;height:426px" id="cat"><div class="ttl" style="left:38px;top:28px">项目分类</div><svg class="abs" style="left:0;top:0" width="607" height="426" viewBox="1836 269 607 426" font-family="Liberation Sans, Noto Sans CJK SC, sans-serif" font-size="16"><line x1="1910" x2="2369.500" y1="400.00" y2="400.00" stroke="#d4d4d4" stroke-width="1.300"/><text x="1900" y="404.00" text-anchor="end" fill="#444" letter-spacing="0.300">600</text><line x1="1910" x2="2369.500" y1="433.25" y2="433.25" stroke="#d4d4d4" stroke-width="1.300"/><text x="1900" y="437.25" text-anchor="end" fill="#444" letter-spacing="0.300">500</text><line x1="1910" x2="2369.500" y1="466.50" y2="466.50" stroke="#d4d4d4" stroke-width="1.300"/><text x="1900" y="470.50" text-anchor="end" fill="#444" letter-spacing="0.300">400</text><line x1="1910" x2="2369.500" y1="499.75" y2="499.75" stroke="#d4d4d4" stroke-width="1.300"/><text x="1900" y="503.75" text-anchor="end" fill="#444" letter-spacing="0.300">300</text><line x1="1910" x2="2369.500" y1="533.00" y2="533.00" stroke="#d4d4d4" stroke-width="1.300"/><text x="1900" y="537.00" text-anchor="end" fill="#444" letter-spacing="0.300">200</text><line x1="1910" x2="2369.500" y1="566.25" y2="566.25" stroke="#d4d4d4" stroke-width="1.300"/><text x="1900" y="570.25" text-anchor="end" fill="#444" letter-spacing="0.300">100</text><line x1="1910" x2="2369.500" y1="599.50" y2="599.50" stroke="#d4d4d4" stroke-width="1.300"/><text x="1900" y="603.50" text-anchor="end" fill="#444" letter-spacing="0.300">0</text><rect x="2235" y="403.300" width="39" height="196.200" fill="#fbb64c"/><rect x="2005" y="598.900" width="40" height="0.900" fill="#9fcdff"/><text x="2254.500" y="377.300" text-anchor="middle" fill="#f6b24a">房屋建筑工程</text><text x="2254.500" y="393" text-anchor="middle" fill="#f6b24a" letter-spacing="0.300">590</text><text x="2025" y="572.500" text-anchor="middle" fill="#409eff">其他</text><text x="2025" y="588.600" text-anchor="middle" fill="#409eff">1</text><text x="2025" y="622" text-anchor="middle" fill="#333">其他</text><text x="2254.500" y="622" text-anchor="middle" fill="#333">房屋建筑工程</text><rect x="1912.500" y="629.500" width="460" height="39" fill="#fff" stroke="#dddddd" stroke-width="1"/><path d="M1914 661.400L2143 636.800L2372.500 661.400V668H1914z" fill="#ececec" stroke="#d8dbe0" stroke-width=".8"/><rect x="1914" y="629" width="275.500" height="39.500" fill="#a7b7cc" fill-opacity=".42"/><line x1="1914" x2="1914" y1="629" y2="668.500" stroke="#a7b7cc" stroke-width="1.800"/><rect x="1909.5" y="640.500" width="9" height="17" rx="1.500" fill="#a7b7cc"/><rect x="1911.5" y="646" width="5" height="1.300" fill="#fff"/><rect x="1911.5" y="650.500" width="5" height="1.300" fill="#fff"/><line x1="2189.5" x2="2189.5" y1="629" y2="668.500" stroke="#a7b7cc" stroke-width="1.800"/><rect x="2185.0" y="640.500" width="9" height="17" rx="1.500" fill="#a7b7cc"/><rect x="2187.0" y="646" width="5" height="1.300" fill="#fff"/><rect x="2187.0" y="650.500" width="5" height="1.300" fill="#fff"/></svg></div>

<!-- BOTTOM -->
<div class="card" style="left:273px;top:718.5px;width:2170px;height:411.5px" id="bot"><div class="ttl" style="left:38px;top:29.5px;letter-spacing:.25px">最近一个月整体出勤率(40.83%)</div><div class="abs" style="left:1941px;top:29.5px;width:223px;height:42px;border:1px solid #d6dbe6;border-radius:5px;background:#fff;font-size:18px;line-height:41px;padding-top:1px;color:#7b7b7b;padding-left:40px;letter-spacing:.3px;white-space:nowrap">选择月份<svg class="abs" style="left:12.800px;top:11.500px" width="18" height="18" viewBox="0 0 18 18"><rect x="1.500" y="3" width="15" height="13" rx="1" fill="none" stroke="#c0c4cc" stroke-width="1.300"/><path d="M1.500 6.800h15M5.300 1.300v3M12.700 1.300v3" stroke="#c0c4cc" stroke-width="1.300" fill="none"/><path d="M4.300 9.600h1.800M8.100 9.600h1.800M11.900 9.600h1.800M4.300 12.600h1.800M8.100 12.600h1.800M11.900 12.600h1.800" stroke="#c0c4cc" stroke-width="1.200"/></svg></div><svg class="abs" style="left:0;top:-.5px" width="2170" height="412" viewBox="273 718 2170 412" font-family="Liberation Sans, Noto Sans CJK SC, sans-serif" font-size="16"><defs><linearGradient id="ag" x1="0" y1="900" x2="0" y2="1078.500" gradientUnits="userSpaceOnUse"><stop offset="0" stop-color="#409eff" stop-opacity=".72"/><stop offset="1" stop-color="#409eff" stop-opacity="0"/></linearGradient></defs><line x1="397" x2="2342.500" y1="877.50" y2="877.50" stroke="#cfcfcf" stroke-width="1.200"/><text x="386.500" y="881.00" text-anchor="end" fill="#444" letter-spacing="0.300">50%</text><line x1="397" x2="2342.500" y1="916.50" y2="916.50" stroke="#cfcfcf" stroke-width="1.200"/><text x="386.500" y="920.00" text-anchor="end" fill="#444" letter-spacing="0.300">40%</text><line x1="397" x2="2342.500" y1="957.50" y2="957.50" stroke="#cfcfcf" stroke-width="1.200"/><text x="386.500" y="961.00" text-anchor="end" fill="#444" letter-spacing="0.300">30%</text><line x1="397" x2="2342.500" y1="996.50" y2="996.50" stroke="#cfcfcf" stroke-width="1.200"/><text x="386.500" y="1000.00" text-anchor="end" fill="#444" letter-spacing="0.300">20%</text><line x1="397" x2="2342.500" y1="1037.50" y2="1037.50" stroke="#cfcfcf" stroke-width="1.200"/><text x="386.500" y="1041.00" text-anchor="end" fill="#444" letter-spacing="0.300">10%</text><line x1="397" x2="2342.500" y1="1078.50" y2="1078.50" stroke="#cfcfcf" stroke-width="1.200"/><text x="386.500" y="1082.00" text-anchor="end" fill="#444" letter-spacing="0.300">0%</text><path d="M397.2 923.6 L464.3 917.7 L531.3 913.0 L598.4 915.0 L665.5 913.8 L732.5 915.0 L799.6 919.3 L866.7 915.8 L933.8 920.1 L1000.8 926.3 L1067.9 925.4 L1135.0 915.6 L1202.0 917.2 L1269.1 914.3 L1336.2 918.2 L1403.2 919.5 L1470.3 911.0 L1537.4 911.4 L1604.4 914.0 L1671.5 904.2 L1738.6 905.1 L1805.6 909.5 L1872.7 911.8 L1939.8 910.3 L2006.9 909.9 L2073.9 903.6 L2141.0 904.4 L2208.1 909.1 L2275.1 900.8 L2342.2 903.6 L2342.2 1078.500 L397.2 1078.500z" fill="#fff" fill-opacity=".55"/><path d="M397.2 923.6 L464.3 917.7 L531.3 913.0 L598.4 915.0 L665.5 913.8 L732.5 915.0 L799.6 919.3 L866.7 915.8 L933.8 920.1 L1000.8 926.3 L1067.9 925.4 L1135.0 915.6 L1202.0 917.2 L1269.1 914.3 L1336.2 918.2 L1403.2 919.5 L1470.3 911.0 L1537.4 911.4 L1604.4 914.0 L1671.5 904.2 L1738.6 905.1 L1805.6 909.5 L1872.7 911.8 L1939.8 910.3 L2006.9 909.9 L2073.9 903.6 L2141.0 904.4 L2208.1 909.1 L2275.1 900.8 L2342.2 903.6 L2342.2 1078.500 L397.2 1078.500z" fill="url(#ag)"/><path d="M397.2 923.6 L464.3 917.7 L531.3 913.0 L598.4 915.0 L665.5 913.8 L732.5 915.0 L799.6 919.3 L866.7 915.8 L933.8 920.1 L1000.8 926.3 L1067.9 925.4 L1135.0 915.6 L1202.0 917.2 L1269.1 914.3 L1336.2 918.2 L1403.2 919.5 L1470.3 911.0 L1537.4 911.4 L1604.4 914.0 L1671.5 904.2 L1738.6 905.1 L1805.6 909.5 L1872.7 911.8 L1939.8 910.3 L2006.9 909.9 L2073.9 903.6 L2141.0 904.4 L2208.1 909.1 L2275.1 900.8 L2342.2 903.6" fill="none" stroke="#409eff" stroke-width="2.600" stroke-linejoin="round"/><circle cx="397.2" cy="923.6" r="2.700" fill="#fff" stroke="#409eff" stroke-width="1.200"/><circle cx="464.3" cy="917.7" r="2.700" fill="#fff" stroke="#409eff" stroke-width="1.200"/><circle cx="531.3" cy="913.0" r="2.700" fill="#fff" stroke="#409eff" stroke-width="1.200"/><circle cx="598.4" cy="915.0" r="2.700" fill="#fff" stroke="#409eff" stroke-width="1.200"/><circle cx="665.5" cy="913.8" r="2.700" fill="#fff" stroke="#409eff" stroke-width="1.200"/><circle cx="732.5" cy="915.0" r="2.700" fill="#fff" stroke="#409eff" stroke-width="1.200"/><circle cx="799.6" cy="919.3" r="2.700" fill="#fff" stroke="#409eff" stroke-width="1.200"/><circle cx="866.7" cy="915.8" r="2.700" fill="#fff" stroke="#409eff" stroke-width="1.200"/><circle cx="933.8" cy="920.1" r="2.700" fill="#fff" stroke="#409eff" stroke-width="1.200"/><circle cx="1000.8" cy="926.3" r="2.700" fill="#fff" stroke="#409eff" stroke-width="1.200"/><circle cx="1067.9" cy="925.4" r="2.700" fill="#fff" stroke="#409eff" stroke-width="1.200"/><circle cx="1135.0" cy="915.6" r="2.700" fill="#fff" stroke="#409eff" stroke-width="1.200"/><circle cx="1202.0" cy="917.2" r="2.700" fill="#fff" stroke="#409eff" stroke-width="1.200"/><circle cx="1269.1" cy="914.3" r="2.700" fill="#fff" stroke="#409eff" stroke-width="1.200"/><circle cx="1336.2" cy="918.2" r="2.700" fill="#fff" stroke="#409eff" stroke-width="1.200"/><circle cx="1403.2" cy="919.5" r="2.700" fill="#fff" stroke="#409eff" stroke-width="1.200"/><circle cx="1470.3" cy="911.0" r="2.700" fill="#fff" stroke="#409eff" stroke-width="1.200"/><circle cx="1537.4" cy="911.4" r="2.700" fill="#fff" stroke="#409eff" stroke-width="1.200"/><circle cx="1604.4" cy="914.0" r="2.700" fill="#fff" stroke="#409eff" stroke-width="1.200"/><circle cx="1671.5" cy="904.2" r="2.700" fill="#fff" stroke="#409eff" stroke-width="1.200"/><circle cx="1738.6" cy="905.1" r="2.700" fill="#fff" stroke="#409eff" stroke-width="1.200"/><circle cx="1805.6" cy="909.5" r="2.700" fill="#fff" stroke="#409eff" stroke-width="1.200"/><circle cx="1872.7" cy="911.8" r="2.700" fill="#fff" stroke="#409eff" stroke-width="1.200"/><circle cx="1939.8" cy="910.3" r="2.700" fill="#fff" stroke="#409eff" stroke-width="1.200"/><circle cx="2006.9" cy="909.9" r="2.700" fill="#fff" stroke="#409eff" stroke-width="1.200"/><circle cx="2073.9" cy="903.6" r="2.700" fill="#fff" stroke="#409eff" stroke-width="1.200"/><circle cx="2141.0" cy="904.4" r="2.700" fill="#fff" stroke="#409eff" stroke-width="1.200"/><circle cx="2208.1" cy="909.1" r="2.700" fill="#fff" stroke="#409eff" stroke-width="1.200"/><circle cx="2275.1" cy="900.8" r="2.700" fill="#fff" stroke="#409eff" stroke-width="1.200"/><circle cx="2342.2" cy="903.6" r="2.700" fill="#fff" stroke="#409eff" stroke-width="1.200"/><text x="397.2" y="1100" text-anchor="middle" fill="#333" letter-spacing="0.280">20230624</text><text x="531.3" y="1100" text-anchor="middle" fill="#333" letter-spacing="0.280">20230626</text><text x="665.5" y="1100" text-anchor="middle" fill="#333" letter-spacing="0.280">20230628</text><text x="799.6" y="1100" text-anchor="middle" fill="#333" letter-spacing="0.280">20230630</text><text x="933.8" y="1100" text-anchor="middle" fill="#333" letter-spacing="0.280">20230702</text><text x="1067.9" y="1100" text-anchor="middle" fill="#333" letter-spacing="0.280">20230704</text><text x="1202.0" y="1100" text-anchor="middle" fill="#333" letter-spacing="0.280">20230706</text><text x="1336.2" y="1100" text-anchor="middle" fill="#333" letter-spacing="0.280">20230708</text><text x="1470.3" y="1100" text-anchor="middle" fill="#333" letter-spacing="0.280">20230710</text><text x="1604.4" y="1100" text-anchor="middle" fill="#333" letter-spacing="0.280">20230712</text><text x="1738.6" y="1100" text-anchor="middle" fill="#333" letter-spacing="0.280">20230714</text><text x="1872.7" y="1100" text-anchor="middle" fill="#333" letter-spacing="0.280">20230716</text><text x="2006.9" y="1100" text-anchor="middle" fill="#333" letter-spacing="0.280">20230718</text><text x="2141.0" y="1100" text-anchor="middle" fill="#333" letter-spacing="0.280">20230720</text><text x="2275.1" y="1100" text-anchor="middle" fill="#333" letter-spacing="0.280">20230722</text><g fill="none" stroke="#5c5c5c" stroke-width="1.400" stroke-linejoin="miter"><path d="M2288.900 836.200h2.700l3.600-10.200 3.100 17.400 3.600-9.200 1.500 4.900h5.100M2288.600 847h20.100"/><path d="M2326.400 834.700h4.100v8.700h-4.100zM2333.100 831.100h4.100v12.300h-4.100zM2339.700 827.500h3.900v15.900h-3.900zM2325.100 847h19.500"/><path d="M2370 827v15.400M2361.500 835.200l8.500 7.700 8.600-7.700M2361 842.400v4.900h17.600v-4.900"/></g></svg></div>

<div id="st"><span>111.62.17.165:8080/smzManage/#/smzHomePage</span></div>
</body>
</html>
